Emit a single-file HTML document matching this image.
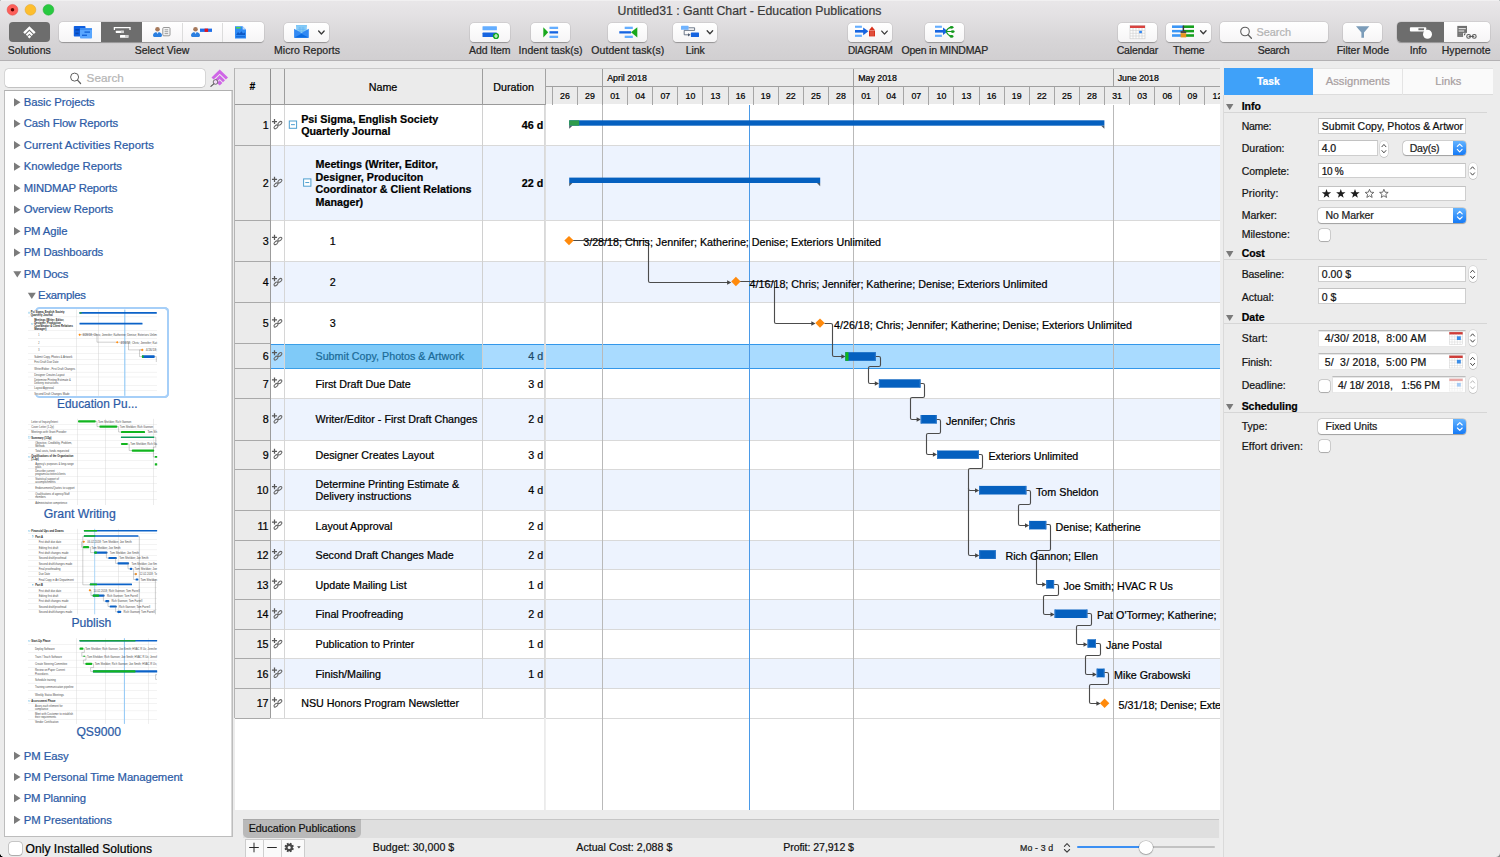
<!DOCTYPE html>
<html lang="en"><head><meta charset="utf-8"><title>Untitled31 : Gantt Chart - Education Publications</title>
<style>
html,body{margin:0;padding:0}
body{width:1500px;height:857px;position:relative;overflow:hidden;background:#ececec;font-family:"Liberation Sans",sans-serif;font-size:11px;color:#000}
.b{position:absolute;box-sizing:border-box;display:block}
.t{position:absolute;white-space:nowrap;line-height:14px;color:#000}
.tb{background:linear-gradient(#ffffff,#f6f5f6);border-radius:4px;box-shadow:0 0.5px 1px rgba(0,0,0,0.28),0 0 0 0.5px rgba(0,0,0,0.08)}
svg{overflow:visible}
.t{-webkit-text-stroke:0.22px currentColor}
</style></head>
<body>
<div class="b " style="left:0px;top:0px;width:1500px;height:60px;background:linear-gradient(#e9e7e9 0%,#e2e0e2 30%,#d8d6d8 62%,#d1cfd1 100%);border-bottom:1px solid #b3b1b3;box-sizing:content-box;"></div>
<div class="b " style="left:0px;top:0px;width:1500px;height:1.3px;background:#f1f0f1;"></div>
<div class="b " style="left:1498px;top:0px;width:2px;height:2px;background:radial-gradient(circle at 0% 100%,transparent 1.7px,#8c9a9a 2.5px);"></div>
<svg class="b" style="left:0px;top:0px;" width="61" height="21" viewBox="0 0 61 21"><circle cx="12.5" cy="9.8" r="5.4" fill="#fd5f5a" stroke="#e0443e" stroke-width="0.5"/><circle cx="30.45" cy="9.8" r="5.4" fill="#fdbe2e" stroke="#dfa023" stroke-width="0.5"/><circle cx="48.45" cy="9.8" r="5.4" fill="#28c940" stroke="#1eab2f" stroke-width="0.5"/><circle cx="12.5" cy="9.8" r="1.75" fill="#5c0300"/></svg>
<div class="t " style="font-size:12.27px;color:#3a3a3a;left:617.6px;top:3px;line-height:16px;">Untitled31 : Gantt Chart - Education Publications</div>
<div class="b " style="left:9.3px;top:22.3px;width:40.3px;height:19.9px;background:#6d6d6d;border-radius:4px;"></div>
<svg class="b" style="left:22px;top:25px;" width="16" height="16" viewBox="0 0 16 16"><path d="M7.4 1.2 L13.6 7.2 L11.9 8.9 L7.4 4.6 L2.9 8.9 L1.2 7.2 Z" fill="#fff"/>
<path d="M7.4 5.9 L11 9.5 L9.6 10.9 L7.4 8.8 L5.2 10.9 L3.8 9.5 Z" fill="#fff"/>
<path d="M7.4 10 L9.2 11.8 L7.4 13.6 L5.6 11.8 Z" fill="#fff"/></svg>
<div class="t " style="letter-spacing:-0.02px;font-size:10.5px;color:#262626;left:7.7px;top:43px;">Solutions</div>
<div class="b tb" style="left:58.8px;top:22.4px;width:205px;height:19.6px;"></div>
<div class="b " style="left:101px;top:22.4px;width:41px;height:19.6px;background:#6d6d6d;"></div>
<div class="b " style="left:182.3px;top:23px;width:0.8px;height:18.5px;background:#dcdcdc;"></div>
<div class="b " style="left:222.3px;top:23px;width:0.8px;height:18.5px;background:#dcdcdc;"></div>
<svg class="b" style="left:73px;top:25px;" width="21" height="16" viewBox="0 0 21 16"><rect x="0.8" y="1" width="11.7" height="10.6" rx="0.8" fill="#0f5fe0"/>
<rect x="2.4" y="4" width="4" height="1.6" fill="#0a47b0"/><rect x="2.4" y="7.6" width="3.2" height="1.6" fill="#0a47b0"/>
<rect x="7" y="3.2" width="12" height="10.3" rx="0.8" fill="#58a6ff"/>
<rect x="7" y="3.2" width="12" height="1.8" fill="#3f8df0"/>
<rect x="11.5" y="6.4" width="5.5" height="1.4" fill="#1565d8"/><rect x="9" y="9.6" width="5" height="1.4" fill="#1565d8"/></svg>
<svg class="b" style="left:113px;top:26px;" width="20" height="14" viewBox="0 0 20 14"><path d="M1.4 4 V1.6 H17 V4" fill="none" stroke="#fff" stroke-width="1.3"/>
<rect x="2.8" y="4.7" width="8.2" height="2.4" rx="0.5" fill="#fff"/><rect x="7.8" y="4.7" width="3.2" height="2.4" fill="#cfcfcf"/>
<rect x="7" y="9" width="8.4" height="2.7" rx="0.5" fill="#fff"/><rect x="12" y="9" width="3.4" height="2.7" fill="#cfcfcf"/></svg>
<svg class="b" style="left:152px;top:25px;" width="21" height="16" viewBox="0 0 21 16"><circle cx="5.5" cy="4.3" r="2.3" fill="#a5785a"/><path d="M1 10.5 q0 -3.6 4.5 -3.6 q4.5 0 4.5 3.6 q0 1.4 -1.2 1.4 h-6.6 q-1.2 0 -1.2 -1.4z" fill="#2b7fe0"/><path d="M4.3 7 l1.2 2 l1.2 -2z" fill="#e8f1fb"/><rect x="10.8" y="2.5" width="7.2" height="8.3" rx="1" fill="#f4f4f4" stroke="#8c8c8c" stroke-width="0.9"/>
<path d="M12.6 4.8 h3.6 M12.6 6.7 h3.6 M12.6 8.6 h3.6" stroke="#8c8c8c" stroke-width="0.8"/></svg>
<svg class="b" style="left:190px;top:25px;" width="25" height="16" viewBox="0 0 25 16"><circle cx="5.5" cy="4.3" r="2.3" fill="#a5785a"/><path d="M1 10.5 q0 -3.6 4.5 -3.6 q4.5 0 4.5 3.6 q0 1.4 -1.2 1.4 h-6.6 q-1.2 0 -1.2 -1.4z" fill="#2b7fe0"/><path d="M4.3 7 l1.2 2 l1.2 -2z" fill="#e8f1fb"/><rect x="10" y="3.6" width="12" height="3.3" fill="#1f6fe8"/><rect x="14.6" y="3.6" width="3.5" height="3.3" fill="#e8121a"/></svg>
<svg class="b" style="left:234px;top:25px;" width="15" height="16" viewBox="0 0 15 16"><path d="M1 1.2 h7.6 l3.4 3.4 v8.9 h-11z" fill="#2f8bf5"/><path d="M8.6 1.2 l3.4 3.4 h-3.4z" fill="#bcdcff"/>
<rect x="2" y="2" width="4.6" height="1.6" fill="#57d34a"/><path d="M2 10 l2-3 l1.6 1.6 l1.8-2.4 l1.6 2.2 l2 -1 v2.6z" fill="#0f58c4"/><rect x="2" y="11.2" width="9" height="1.2" fill="#1267d8"/></svg>
<div class="t " style="font-size:10.5px;color:#262626;left:134.7px;top:43px;">Select View</div>
<div class="b tb" style="left:284.2px;top:22.5px;width:44.8px;height:19.4px;"></div>
<svg class="b" style="left:293px;top:24px;" width="19" height="16" viewBox="0 0 19 16"><rect x="3" y="1.1" width="10.9" height="8.4" fill="#93d2f9"/><rect x="3" y="1.1" width="10.9" height="1.5" fill="#7cc6f6"/>
<path d="M4.4 4h8.2M4.4 5.6h8.2M4.4 7.2h8.2M6.9 3v5M10 3v5" stroke="#5fb2f2" stroke-width="0.7"/>
<path d="M1.1 4.8 L8.5 9.1 L15.8 4.8 V13.8 H1.1z" fill="#3189f3"/><path d="M1.1 13.8 L8.5 9.7 L15.8 13.8z" fill="#0b6ce3"/></svg>
<svg class="b" style="left:317px;top:30px;" width="10" height="6" viewBox="-0.65 -0 10 6"><path d="M1 1 L3.75 4 L6.5 1" fill="none" stroke="#3a3a3a" stroke-width="1.3" stroke-linecap="round" stroke-linejoin="round"/></svg>
<div class="t " style="letter-spacing:0.05px;font-size:10.5px;color:#262626;left:274px;top:43px;">Micro Reports</div>
<div class="b tb" style="left:470px;top:22.5px;width:39.6px;height:19.4px;"></div>
<svg class="b" style="left:481px;top:25px;" width="19" height="16" viewBox="0 0 19 16"><rect x="1.5" y="1.2" width="14.4" height="4.1" rx="0.6" fill="#63adff"/><rect x="1.5" y="7.6" width="14.4" height="4.4" rx="0.6" fill="#1664e0"/>
<circle cx="15" cy="11" r="3.1" fill="#17a81f"/><path d="M15 9.1v3.8M13.1 11h3.8" stroke="#dfffdc" stroke-width="1.2"/></svg>
<div class="t " style="letter-spacing:-0.07px;font-size:10.5px;color:#262626;left:469px;top:43px;">Add Item</div>
<div class="b tb" style="left:531.1px;top:22.5px;width:39.3px;height:19.4px;"></div>
<svg class="b" style="left:542px;top:25px;" width="19" height="16" viewBox="0 0 19 16"><path d="M1.3 2.2 L6.2 7.3 L1.3 12.5z" fill="#18a81c"/>
<rect x="7.5" y="1.7" width="8.6" height="2.3" fill="#63adff"/><rect x="7.5" y="6.2" width="8.6" height="2.3" fill="#1664e0"/><rect x="7.5" y="10.7" width="8.6" height="2.3" fill="#63adff"/></svg>
<div class="t " style="letter-spacing:0.03px;font-size:10.5px;color:#262626;left:518.6px;top:43px;">Indent task(s)</div>
<div class="b tb" style="left:608px;top:22.5px;width:39.4px;height:19.4px;"></div>
<svg class="b" style="left:618px;top:25px;" width="22" height="16" viewBox="0 0 22 16"><path d="M19.3 2.2 L13 7.3 L19.3 12.5z" fill="#18a81c"/>
<rect x="6.7" y="1.7" width="8.1" height="2.3" fill="#63adff"/><rect x="1.3" y="6.2" width="11.7" height="2.3" fill="#1664e0"/><rect x="6.7" y="10.7" width="8.1" height="2.3" fill="#63adff"/></svg>
<div class="t " style="letter-spacing:0.1px;font-size:10.5px;color:#262626;left:591.2px;top:43px;">Outdent task(s)</div>
<div class="b tb" style="left:672.9px;top:22.5px;width:44.6px;height:19.4px;"></div>
<svg class="b" style="left:680px;top:24px;" width="22" height="16" viewBox="0 0 22 16"><rect x="1" y="1.8" width="7.6" height="4" rx="0.6" fill="#6fb3ff"/><rect x="10.9" y="8.6" width="8.1" height="4.4" rx="0.6" fill="#1664e0"/>
<path d="M8.6 3.8 H14.6 V6.4 H4.2 V10.8 H9" fill="none" stroke="#4d5a70" stroke-width="0.8"/><path d="M8 9.2 L10.6 10.8 L8 12.4z" fill="#4d5a70"/></svg>
<svg class="b" style="left:706px;top:29px;" width="9" height="7" viewBox="-0.15 -0.8 9 7"><path d="M1 1 L3.75 4 L6.5 1" fill="none" stroke="#3a3a3a" stroke-width="1.3" stroke-linecap="round" stroke-linejoin="round"/></svg>
<div class="t " style="letter-spacing:-0.14px;font-size:10.5px;color:#262626;left:685.8px;top:43px;">Link</div>
<div class="b tb" style="left:847.8px;top:22.5px;width:44.6px;height:19.4px;"></div>
<svg class="b" style="left:854px;top:24px;" width="24" height="16" viewBox="0 0 24 16"><rect x="1" y="1.7" width="6.9" height="2.1" fill="#63adff"/><rect x="1" y="10.7" width="6.9" height="2.2" fill="#63adff"/>
<rect x="1" y="6" width="9" height="2.6" fill="#1664e0"/><path d="M9.2 3.4 L14.4 7.3 L9.2 11.2z" fill="#1664e0"/>
<path d="M15.2 6 L18 2.4 L20.8 6z" fill="#d8301c"/><rect x="15" y="6.4" width="6" height="6" fill="#d8301c"/><path d="M17 7.2v4.6M19 7.2v4.6" stroke="#f08a78" stroke-width="0.7"/></svg>
<svg class="b" style="left:880px;top:30px;" width="10" height="7" viewBox="-0.75 -0.1 10 7"><path d="M1 1 L3.75 4 L6.5 1" fill="none" stroke="#3a3a3a" stroke-width="1.3" stroke-linecap="round" stroke-linejoin="round"/></svg>
<div class="t " style="letter-spacing:-0.3px;font-size:10.03px;color:#262626;left:847.9px;top:44px;">DIAGRAM</div>
<div class="b tb" style="left:924.9px;top:22.5px;width:39.4px;height:19.4px;"></div>
<svg class="b" style="left:934px;top:24px;" width="23" height="16" viewBox="0 0 23 16"><rect x="1" y="1.7" width="6.9" height="2.1" fill="#63adff"/><rect x="1" y="10.7" width="6.9" height="2.2" fill="#63adff"/>
<rect x="1" y="6" width="9" height="2.6" fill="#1664e0"/><path d="M9 3.6 L13.8 7.3 L9 11z" fill="#1664e0"/>
<path d="M12 7.3 Q14 3.6 17 3.4 M12.5 7.5 H17.6 M12 7.3 Q14 11.6 17 12.2" fill="none" stroke="#15991f" stroke-width="1.1"/>
<ellipse cx="17.6" cy="3.3" rx="1.9" ry="1.4" fill="#15991f"/><ellipse cx="18.7" cy="7.6" rx="1.9" ry="1.4" fill="#15991f"/><ellipse cx="17.6" cy="12.4" rx="1.9" ry="1.4" fill="#15991f"/></svg>
<div class="t " style="letter-spacing:-0.18px;font-size:10.5px;color:#262626;left:901.4px;top:43px;">Open in MINDMAP</div>
<div class="b tb" style="left:1117.7px;top:22.5px;width:39.4px;height:19.4px;"></div>
<svg class="b" style="left:1129px;top:24px;" width="18" height="17" viewBox="0 -0.6 18 17"><rect x="1" y="1" width="15" height="13.2" fill="#fdfdfd" stroke="#c9c9c9" stroke-width="0.6"/><rect x="1" y="1" width="15" height="2.4" fill="#d9433f"/>
<path d="M1 6h15M1 8.7h15M1 11.4h15M4 3.4v10.8M7 3.4v10.8M10 3.4v10.8M13 3.4v10.8" stroke="#cfcfcf" stroke-width="0.6"/><rect x="10.2" y="6.2" width="2.7" height="2.4" fill="#2f86f2"/></svg>
<div class="t " style="letter-spacing:-0.16px;font-size:10.5px;color:#262626;left:1116.7px;top:43px;">Calendar</div>
<div class="b tb" style="left:1166.3px;top:22.5px;width:44.8px;height:19.4px;"></div>
<svg class="b" style="left:1171px;top:24px;" width="26" height="16" viewBox="0 0 26 16"><rect x="1" y="1.4" width="11" height="2.6" fill="#3b96f5"/><rect x="12" y="1.4" width="11" height="2.6" fill="#16a01e"/>
<rect x="1" y="5.9" width="11" height="2.5" fill="#3b96f5"/><rect x="12" y="5.9" width="11" height="2.5" fill="#16a01e"/>
<rect x="1" y="10.2" width="11" height="2.6" fill="#3b96f5"/><rect x="12" y="10.2" width="11" height="2.6" fill="#16a01e"/>
<rect x="11.6" y="1.6" width="1.5" height="5.6" fill="#3a3a3a"/><rect x="9.6" y="7" width="5.6" height="2.2" fill="#4a4a4a"/><rect x="9.6" y="9.2" width="5.6" height="4.2" fill="#e8961e"/></svg>
<svg class="b" style="left:1199px;top:29px;" width="10" height="7" viewBox="-0.55 -0.8 10 7"><path d="M1 1 L3.75 4 L6.5 1" fill="none" stroke="#3a3a3a" stroke-width="1.3" stroke-linecap="round" stroke-linejoin="round"/></svg>
<div class="t " style="letter-spacing:-0.28px;font-size:10.5px;color:#262626;left:1173px;top:43px;">Theme</div>
<div class="b tb" style="left:1219.7px;top:22.3px;width:108px;height:19.5px;"></div>
<svg class="b" style="left:1239px;top:25px;" width="15" height="16" viewBox="0 -0.5 15 16"><circle cx="6" cy="6" r="4.3" fill="none" stroke="#5e5e5e" stroke-width="1.1"/><path d="M9.1 9.3 L12.4 12.8" stroke="#5e5e5e" stroke-width="1.3" stroke-linecap="round"/></svg>
<div class="t " style="font-size:10.92px;color:#b3b3b3;left:1256.4px;top:24px;line-height:16px;">Search</div>
<div class="t " style="letter-spacing:-0.28px;font-size:10.5px;color:#262626;left:1257.7px;top:43px;">Search</div>
<div class="b tb" style="left:1343px;top:22.5px;width:39.4px;height:19.4px;"></div>
<svg class="b" style="left:1355px;top:25px;" width="17" height="15" viewBox="0 0 17 15"><path d="M1 1.3 H14.4 L9 7.4 V12.8 H6.4 V7.4z" fill="#7b9cb9"/></svg>
<div class="t " style="letter-spacing:-0.02px;font-size:10.5px;color:#262626;left:1336.7px;top:43px;">Filter Mode</div>
<div class="b tb" style="left:1397.2px;top:22.2px;width:93px;height:20px;"></div>
<div class="b " style="left:1397.2px;top:22.2px;width:46.8px;height:20px;background:#6d6d6d;border-radius:4px 0 0 4px;"></div>
<svg class="b" style="left:1408px;top:25px;" width="27" height="16" viewBox="0 0 27 16"><rect x="1.9" y="2.2" width="16.4" height="4.2" rx="0.9" fill="#fff"/><rect x="10.4" y="3.3" width="5.6" height="1.9" fill="#6d6d6d"/>
<circle cx="19.5" cy="9.3" r="4.5" fill="#fff"/></svg>
<svg class="b" style="left:1456px;top:25px;" width="23" height="16" viewBox="0 0 23 16"><rect x="1.3" y="0.9" width="9.7" height="11" fill="#707070"/><rect x="2.6" y="3" width="7.2" height="1.2" fill="#dcdcdc"/><rect x="2.6" y="5.3" width="5.6" height="1.4" fill="#cfcfcf"/>
<path d="M2.6 8.4h4M2.6 10.2h4" stroke="#8c8c8c" stroke-width="0.8"/>
<rect x="7.1" y="7.9" width="4.6" height="4.6" fill="#fbfbfb"/><path d="M8 8.6 H10.2 L8 10.8z" fill="#5a5a5a"/>
<circle cx="12.6" cy="11.4" r="1.85" fill="#fbfbfb" stroke="#585858" stroke-width="1.1"/><circle cx="18.3" cy="11.4" r="1.85" fill="#fbfbfb" stroke="#585858" stroke-width="1.1"/><path d="M12.6 11.4h5.7" stroke="#585858" stroke-width="1.1"/></svg>
<div class="t " style="letter-spacing:-0.13px;font-size:10.5px;color:#262626;left:1409.7px;top:43px;">Info</div>
<div class="t " style="letter-spacing:0.06px;font-size:10.5px;color:#262626;left:1441.7px;top:43px;">Hypernote</div>
<div class="b " style="left:5.2px;top:68.9px;width:200.2px;height:18.3px;background:#fff;border-radius:3.5px;box-shadow:0 0 0 0.5px rgba(0,0,0,0.18),0 0.5px 0.5px rgba(0,0,0,0.18);"></div>
<svg class="b" style="left:69px;top:71px;" width="14" height="15" viewBox="0 -0.5 14 15"><circle cx="5.6" cy="5.6" r="4" fill="none" stroke="#5e5e5e" stroke-width="1"/><path d="M8.5 8.7 L11.6 12" stroke="#5e5e5e" stroke-width="1.2" stroke-linecap="round"/></svg>
<div class="t " style="font-size:11.74px;color:#b5b5b5;left:86.6px;top:70px;line-height:16px;">Search</div>
<svg class="b" style="left:210px;top:69px;" width="20" height="19" viewBox="0 0 20 19"><path d="M9.7 0.6 L18 8.4 L15.9 10.5 L9.7 4.7 L3.6 10.5 L1.5 8.4z" fill="#cf66e6"/>
<path d="M9.7 5.9 L15 11.2 L13 13.2 L9.7 10 L6.5 13.2 L4.5 11.2z" fill="#cf66e6"/>
<path d="M9.7 11.2 L12.4 13.9 L9.7 16.6 L7 13.9z" fill="#cf66e6"/>
<circle cx="5.5" cy="13" r="2.3" fill="#f3dcf8" stroke="#555" stroke-width="0.8"/><path d="M3.8 14.8 L0.9 17.4" stroke="#555" stroke-width="1.1" stroke-linecap="round"/></svg>
<div class="b " style="left:4.4px;top:89.6px;width:228.2px;height:747.8px;background:#fff;border:1px solid #bdbdbd;border-top-color:#b0b0b0;"></div>
<div class="b " style="left:231px;top:91px;width:0.7px;height:745.4px;background:#d9d9d9;"></div>
<svg class="b" style="left:14px;top:98px;" width="8" height="11" viewBox="-0 -0.2 8 11"><path d="M0 0 L6.5 4.1 L0 8.2z" fill="#7b7b7b"/></svg>
<div class="t sf" style="letter-spacing:-0.04px;font-size:11.3px;color:#2c5ba6;left:23.7px;top:95px;">Basic Projects</div>
<svg class="b" style="left:14px;top:119px;" width="8" height="11" viewBox="-0 -0.6 8 11"><path d="M0 0 L6.5 4.1 L0 8.2z" fill="#7b7b7b"/></svg>
<div class="t sf" style="letter-spacing:-0.1px;font-size:11.3px;color:#2c5ba6;left:23.7px;top:116px;">Cash Flow Reports</div>
<svg class="b" style="left:14px;top:141px;" width="8" height="11" viewBox="-0 -0.1 8 11"><path d="M0 0 L6.5 4.1 L0 8.2z" fill="#7b7b7b"/></svg>
<div class="t sf" style="letter-spacing:0.11px;font-size:11.3px;color:#2c5ba6;left:23.7px;top:138px;">Current Activities Reports</div>
<svg class="b" style="left:14px;top:162px;" width="8" height="11" viewBox="-0 -0.6 8 11"><path d="M0 0 L6.5 4.1 L0 8.2z" fill="#7b7b7b"/></svg>
<div class="t sf" style="letter-spacing:-0.02px;font-size:11.3px;color:#2c5ba6;left:23.7px;top:159px;">Knowledge Reports</div>
<svg class="b" style="left:14px;top:184px;" width="8" height="11" viewBox="-0 -0.1 8 11"><path d="M0 0 L6.5 4.1 L0 8.2z" fill="#7b7b7b"/></svg>
<div class="t sf" style="letter-spacing:-0.16px;font-size:11.3px;color:#2c5ba6;left:23.7px;top:181px;">MINDMAP Reports</div>
<svg class="b" style="left:14px;top:205px;" width="8" height="11" viewBox="-0 -0.6 8 11"><path d="M0 0 L6.5 4.1 L0 8.2z" fill="#7b7b7b"/></svg>
<div class="t sf" style="letter-spacing:-0.02px;font-size:11.3px;color:#2c5ba6;left:23.7px;top:202px;">Overview Reports</div>
<svg class="b" style="left:14px;top:227px;" width="8" height="11" viewBox="-0 -0.1 8 11"><path d="M0 0 L6.5 4.1 L0 8.2z" fill="#7b7b7b"/></svg>
<div class="t sf" style="letter-spacing:-0.11px;font-size:11.3px;color:#2c5ba6;left:23.7px;top:224px;">PM Agile</div>
<svg class="b" style="left:14px;top:248px;" width="8" height="11" viewBox="-0 -0.6 8 11"><path d="M0 0 L6.5 4.1 L0 8.2z" fill="#7b7b7b"/></svg>
<div class="t sf" style="letter-spacing:-0.12px;font-size:11.3px;color:#2c5ba6;left:23.7px;top:245px;">PM Dashboards</div>
<svg class="b" style="left:13px;top:271px;" width="11" height="8" viewBox="-0.3 -0 11 8"><path d="M0 0.3 H8 L4 6.6z" fill="#7b7b7b"/></svg>
<div class="t sf" style="letter-spacing:-0.19px;font-size:11.3px;color:#2c5ba6;left:23.7px;top:267px;">PM Docs</div>
<svg class="b" style="left:27px;top:292px;" width="11" height="9" viewBox="-0.8 -0.5 11 9"><path d="M0 0.3 H8 L4 6.6z" fill="#7b7b7b"/></svg>
<div class="t sf" style="letter-spacing:-0.25px;font-size:11.3px;color:#2c5ba6;left:38.1px;top:288px;">Examples</div>
<svg class="b" style="left:14px;top:751px;" width="8" height="11" viewBox="-0 -0.7 8 11"><path d="M0 0 L6.5 4.1 L0 8.2z" fill="#7b7b7b"/></svg>
<div class="t sf" style="letter-spacing:-0.02px;font-size:11.3px;color:#2c5ba6;left:23.7px;top:749px;">PM Easy</div>
<svg class="b" style="left:14px;top:772px;" width="8" height="11" viewBox="-0 -0.9 8 11"><path d="M0 0 L6.5 4.1 L0 8.2z" fill="#7b7b7b"/></svg>
<div class="t sf" style="letter-spacing:-0.09px;font-size:11.3px;color:#2c5ba6;left:23.7px;top:770px;">PM Personal Time Management</div>
<svg class="b" style="left:14px;top:794px;" width="8" height="11" viewBox="-0 -0.1 8 11"><path d="M0 0 L6.5 4.1 L0 8.2z" fill="#7b7b7b"/></svg>
<div class="t sf" style="letter-spacing:-0.18px;font-size:11.3px;color:#2c5ba6;left:23.7px;top:791px;">PM Planning</div>
<svg class="b" style="left:14px;top:815px;" width="8" height="11" viewBox="-0 -0.7 8 11"><path d="M0 0 L6.5 4.1 L0 8.2z" fill="#7b7b7b"/></svg>
<div class="t sf" style="letter-spacing:-0.06px;font-size:11.3px;color:#2c5ba6;left:23.7px;top:813px;">PM Presentations</div>
<div class="t " style="font-size:11.88px;color:#2c5ba6;left:57px;top:395px;line-height:18px;">Education Pu...</div>
<div class="t " style="font-size:12.28px;color:#2c5ba6;left:43.7px;top:505px;line-height:18px;">Grant Writing</div>
<div class="t " style="font-size:12.2px;color:#2c5ba6;left:71.4px;top:614px;line-height:18px;">Publish</div>
<div class="t " style="font-size:12.15px;color:#2c5ba6;left:76.4px;top:723px;line-height:18px;">QS9000</div>
<div class="b " style="left:9px;top:842px;width:12.8px;height:12.8px;background:#fff;border-radius:3px;box-shadow:0 0 0 0.5px rgba(0,0,0,0.3),0 0.5px 1px rgba(0,0,0,0.15);"></div>
<div class="t " style="font-size:12.1px;left:25.6px;top:840px;line-height:18px;">Only Installed Solutions</div>
<div class="b " style="left:34.9px;top:307.1px;width:134.4px;height:91.2px;border:2.9px solid #a6cff8;border-radius:4.5px;"></div>
<div class="b " style="left:28px;top:309.9px;width:129.2px;height:85.6px;background:#fff;"></div>
<div class="b " style="left:28px;top:418.8px;width:129.2px;height:86.2px;background:#fff;"></div>
<div class="b " style="left:28px;top:528.8px;width:129.2px;height:85.5px;background:#fff;"></div>
<div class="b " style="left:28px;top:638.2px;width:129.2px;height:85.7px;background:#fff;"></div>
<svg class="b" style="left:20px;top:300px" width="160" height="430" viewBox="20 300 160 430"><rect x="28" y="316.73" width="129" height="0.35" fill="#dcdcdc"/><rect x="28" y="330.43" width="129" height="0.35" fill="#dcdcdc"/><rect x="28" y="338.33" width="129" height="0.35" fill="#dcdcdc"/><rect x="28" y="346.13" width="129" height="0.35" fill="#dcdcdc"/><rect x="28" y="353.53" width="129" height="0.35" fill="#dcdcdc"/><rect x="28" y="359.13" width="129" height="0.35" fill="#dcdcdc"/><rect x="28" y="364.33" width="129" height="0.35" fill="#dcdcdc"/><rect x="28" y="371.93" width="129" height="0.35" fill="#dcdcdc"/><rect x="28" y="376.83" width="129" height="0.35" fill="#dcdcdc"/><rect x="28" y="385.03" width="129" height="0.35" fill="#dcdcdc"/><rect x="28" y="390.23" width="129" height="0.35" fill="#dcdcdc"/><rect x="76.2" y="309.6" width="0.4" height="86.2" fill="#d2d2d2"/><rect x="98.2" y="309.6" width="0.4" height="86.2" fill="#c8c8c8"/><rect x="124.25" y="309.6" width="1.1" height="86.2" fill="#8fc7f5"/><rect x="79.5" y="311.9" width="77.3" height="1.9" rx="0.3" fill="#0b62c8"/><rect x="79.5" y="311.9" width="2.1" height="1.9" rx="0.3" fill="#2e9b4a"/><rect x="79.5" y="322.7" width="63" height="1.9" rx="0.3" fill="#0b62c8"/><path d="M80.5 334.7 H97 V342.2 H116" fill="none" stroke="#777" stroke-width="0.35"/><path d="M118.5 342.2 H128.5 V349.9 H141" fill="none" stroke="#777" stroke-width="0.35"/><path d="M143.5 349.9 H139.5 V356.6 H142" fill="none" stroke="#777" stroke-width="0.35"/><path d="M154.8 356.6 H156.3 V362" fill="none" stroke="#777" stroke-width="0.35"/><path d="M79.7 333.4 l1.3 1.3 l-1.3 1.3 l-1.3 -1.3z" fill="#ff8a0c"/><path d="M117.2 340.9 l1.3 1.3 l-1.3 1.3 l-1.3 -1.3z" fill="#ff8a0c"/><path d="M142.2 348.6 l1.3 1.3 l-1.3 1.3 l-1.3 -1.3z" fill="#ff8a0c"/><rect x="141.9" y="355.2" width="12.9" height="2.8" rx="0.9" fill="#0b62c8"/><rect x="141.9" y="355.2" width="1.7" height="2.8" rx="0.9" fill="#12b51f"/><text x="82.4" y="336.1" textLength="74.6" lengthAdjust="spacingAndGlyphs" font-size="2.7" fill="#4a4a4a">3/28/18; Chris; Jennifer; Katherine; Denise; Exteriors Unlim</text><text x="120.4" y="343.6" textLength="36.6" lengthAdjust="spacingAndGlyphs" font-size="2.7" fill="#4a4a4a">4/16/18; Chris; Jennifer; Kat</text><text x="145.8" y="351.3" textLength="11.2" lengthAdjust="spacingAndGlyphs" font-size="2.7" fill="#4a4a4a">4/26/18;</text><rect x="28.4" y="312.05" width="1.5" height="1.5" fill="#e6f4fc" stroke="#7dc3e8" stroke-width="0.3"/><rect x="31.6" y="323.25" width="1.5" height="1.5" fill="#e6f4fc" stroke="#7dc3e8" stroke-width="0.3"/><text x="30.7" y="313" textLength="33.9" lengthAdjust="spacingAndGlyphs" font-size="2.7" font-weight="bold" fill="#1a1a1a">Psi Sigma, English Society</text><text x="30.7" y="316.3" textLength="22.1" lengthAdjust="spacingAndGlyphs" font-size="2.7" font-weight="bold" fill="#1a1a1a">Quarterly Journal</text><text x="34.2" y="320.6" textLength="29.8" lengthAdjust="spacingAndGlyphs" font-size="2.7" font-weight="bold" fill="#1a1a1a">Meetings (Writer, Editor,</text><text x="34.2" y="323.7" textLength="26.8" lengthAdjust="spacingAndGlyphs" font-size="2.7" font-weight="bold" fill="#1a1a1a">Designer, Produciton</text><text x="34.2" y="326.9" textLength="38.8" lengthAdjust="spacingAndGlyphs" font-size="2.7" font-weight="bold" fill="#1a1a1a">Coordinator &amp; Client Relations</text><text x="34.2" y="330" textLength="12.3" lengthAdjust="spacingAndGlyphs" font-size="2.7" font-weight="bold" fill="#1a1a1a">Manager)</text><text x="38.2" y="336.1" textLength="1.2" lengthAdjust="spacingAndGlyphs" font-size="2.7" fill="#4a4a4a">1</text><text x="38.2" y="343.7" textLength="1.2" lengthAdjust="spacingAndGlyphs" font-size="2.7" fill="#4a4a4a">2</text><text x="38.2" y="351.3" textLength="1.2" lengthAdjust="spacingAndGlyphs" font-size="2.7" fill="#4a4a4a">3</text><text x="34.2" y="357.9" textLength="38.1" lengthAdjust="spacingAndGlyphs" font-size="2.7" fill="#4a4a4a">Submit Copy, Photos &amp; Artwork</text><text x="34.2" y="363.1" textLength="24.3" lengthAdjust="spacingAndGlyphs" font-size="2.7" fill="#4a4a4a">First Draft Due Date</text><text x="34.2" y="369.8" textLength="40.8" lengthAdjust="spacingAndGlyphs" font-size="2.7" fill="#4a4a4a">Writer/Editor - First Draft Changes</text><text x="34.2" y="376.2" textLength="30.4" lengthAdjust="spacingAndGlyphs" font-size="2.7" fill="#4a4a4a">Designer Creates Layout</text><text x="34.2" y="381.3" textLength="36.6" lengthAdjust="spacingAndGlyphs" font-size="2.7" fill="#4a4a4a">Determine Printing Estimate &amp;</text><text x="34.2" y="384.4" textLength="24.1" lengthAdjust="spacingAndGlyphs" font-size="2.7" fill="#4a4a4a">Delivery instructions</text><text x="34.2" y="389.3" textLength="19.8" lengthAdjust="spacingAndGlyphs" font-size="2.7" fill="#4a4a4a">Layout Approval</text><text x="34.2" y="394.6" textLength="35.4" lengthAdjust="spacingAndGlyphs" font-size="2.7" fill="#4a4a4a">Second Draft Changes Made</text><rect x="28" y="424.03" width="129" height="0.35" fill="#dcdcdc"/><rect x="28" y="429.33" width="129" height="0.35" fill="#dcdcdc"/><rect x="28" y="434.73" width="129" height="0.35" fill="#dcdcdc"/><rect x="28" y="440.43" width="129" height="0.35" fill="#dcdcdc"/><rect x="28" y="447.43" width="129" height="0.35" fill="#dcdcdc"/><rect x="28" y="453.63" width="129" height="0.35" fill="#dcdcdc"/><rect x="28" y="460.33" width="129" height="0.35" fill="#dcdcdc"/><rect x="28" y="468.13" width="129" height="0.35" fill="#dcdcdc"/><rect x="28" y="476.03" width="129" height="0.35" fill="#dcdcdc"/><rect x="28" y="483.53" width="129" height="0.35" fill="#dcdcdc"/><rect x="28" y="491.13" width="129" height="0.35" fill="#dcdcdc"/><rect x="28" y="499.13" width="129" height="0.35" fill="#dcdcdc"/><rect x="77" y="418.8" width="0.4" height="86.2" fill="#d2d2d2"/><rect x="105.2" y="418.8" width="0.4" height="86.2" fill="#d0d0d0"/><rect x="153.4" y="418.8" width="0.4" height="86.2" fill="#d0d0d0"/><path d="M95.8 421.4 H97 V426.6 H99.3" fill="none" stroke="#777" stroke-width="0.35"/><path d="M117.4 426.6 H118.6 V432 H121" fill="none" stroke="#777" stroke-width="0.35"/><path d="M154.2 437.2 H155.8 V447 H153.4 V457 H155" fill="none" stroke="#777" stroke-width="0.35"/><path d="M127.9 444 H129.2 V450.5 H131.7" fill="none" stroke="#777" stroke-width="0.35"/><rect x="78" y="420.3" width="17.8" height="2.2" rx="0.9" fill="#12b51f"/><rect x="99.3" y="425.5" width="18.1" height="2.2" rx="0.9" fill="#12b51f"/><rect x="120.9" y="431" width="24.2" height="2.1" rx="0.9" fill="#12b51f"/><rect x="120.9" y="436.4" width="33.3" height="1.6" rx="0.3" fill="#0c9a58"/><rect x="120.9" y="442.9" width="7" height="2.1" rx="0.9" fill="#12b51f"/><rect x="131.7" y="449.4" width="22.5" height="2.3" rx="0.9" fill="#12b51f"/><rect x="154.8" y="455.9" width="2.4" height="1.9" rx="0.3" fill="#12b51f"/><rect x="154.8" y="463.3" width="2.4" height="2.2" rx="0.3" fill="#12b51f"/><text x="98" y="422.7" textLength="33.4" lengthAdjust="spacingAndGlyphs" font-size="2.7" fill="#4a4a4a">Tom Sheldon; Rich Gannon</text><text x="119.8" y="428" textLength="33.2" lengthAdjust="spacingAndGlyphs" font-size="2.7" fill="#4a4a4a">Tom Sheldon; Rich Gannon</text><text x="147.4" y="433.3" textLength="9.6" lengthAdjust="spacingAndGlyphs" font-size="2.7" fill="#4a4a4a">Tom Sh</text><text x="130.3" y="445.3" textLength="26.7" lengthAdjust="spacingAndGlyphs" font-size="2.7" fill="#4a4a4a">Tom Sheldon; Rich Ga</text><rect x="28.6" y="436.75" width="1.5" height="1.5" fill="#e6f4fc" stroke="#7dc3e8" stroke-width="0.3"/><rect x="28.6" y="456.25" width="1.5" height="1.5" fill="#e6f4fc" stroke="#7dc3e8" stroke-width="0.3"/><text x="31.3" y="422.7" textLength="26.6" lengthAdjust="spacingAndGlyphs" font-size="2.7" fill="#4a4a4a">Letter of Inquiry/Intent</text><text x="31.3" y="428" textLength="22.7" lengthAdjust="spacingAndGlyphs" font-size="2.7" fill="#4a4a4a">Cover Letter (1-2p)</text><text x="31.3" y="433.3" textLength="35" lengthAdjust="spacingAndGlyphs" font-size="2.7" fill="#4a4a4a">Meetings with Grant Provider</text><text x="31.3" y="439" textLength="20.2" lengthAdjust="spacingAndGlyphs" font-size="2.7" font-weight="bold" fill="#1a1a1a">Summary (1/2p)</text><text x="35.2" y="443.6" textLength="36.8" lengthAdjust="spacingAndGlyphs" font-size="2.7" fill="#4a4a4a">Objective, Credibility, Problem,</text><text x="35.2" y="446.9" textLength="9.7" lengthAdjust="spacingAndGlyphs" font-size="2.7" fill="#4a4a4a">Methods</text><text x="35.2" y="451.9" textLength="33.8" lengthAdjust="spacingAndGlyphs" font-size="2.7" fill="#4a4a4a">Total costs, funds requested</text><text x="31.3" y="456.8" textLength="42.1" lengthAdjust="spacingAndGlyphs" font-size="2.7" font-weight="bold" fill="#1a1a1a">Qualifications of the Organization</text><text x="31.3" y="460" textLength="7.4" lengthAdjust="spacingAndGlyphs" font-size="2.7" font-weight="bold" fill="#1a1a1a">(1-2p)</text><text x="35.2" y="464.5" textLength="38.5" lengthAdjust="spacingAndGlyphs" font-size="2.7" fill="#4a4a4a">Agency's purposes &amp; long-range</text><text x="35.2" y="467.7" textLength="6.2" lengthAdjust="spacingAndGlyphs" font-size="2.7" fill="#4a4a4a">goals</text><text x="35.2" y="472.1" textLength="19.5" lengthAdjust="spacingAndGlyphs" font-size="2.7" fill="#4a4a4a">Describe current</text><text x="35.2" y="475.3" textLength="30.3" lengthAdjust="spacingAndGlyphs" font-size="2.7" fill="#4a4a4a">programs/activities/clients</text><text x="35.2" y="479.6" textLength="23.9" lengthAdjust="spacingAndGlyphs" font-size="2.7" fill="#4a4a4a">Statistical support of</text><text x="35.2" y="482.9" textLength="20.4" lengthAdjust="spacingAndGlyphs" font-size="2.7" fill="#4a4a4a">accomplishments</text><text x="35.2" y="488.9" textLength="39.4" lengthAdjust="spacingAndGlyphs" font-size="2.7" fill="#4a4a4a">Endorsements/Quotes to support</text><text x="35.2" y="494.9" textLength="34.4" lengthAdjust="spacingAndGlyphs" font-size="2.7" fill="#4a4a4a">Qualifications of agency/Staff</text><text x="35.2" y="498.3" textLength="10.7" lengthAdjust="spacingAndGlyphs" font-size="2.7" fill="#4a4a4a">members</text><text x="35.2" y="504.1" textLength="32.1" lengthAdjust="spacingAndGlyphs" font-size="2.7" fill="#4a4a4a">Administrative competence</text><rect x="28" y="533.63" width="129" height="0.35" fill="#dcdcdc"/><rect x="28" y="539.03" width="129" height="0.35" fill="#dcdcdc"/><rect x="28" y="544.33" width="129" height="0.35" fill="#dcdcdc"/><rect x="28" y="549.73" width="129" height="0.35" fill="#dcdcdc"/><rect x="28" y="555.13" width="129" height="0.35" fill="#dcdcdc"/><rect x="28" y="560.53" width="129" height="0.35" fill="#dcdcdc"/><rect x="28" y="565.93" width="129" height="0.35" fill="#dcdcdc"/><rect x="28" y="571.33" width="129" height="0.35" fill="#dcdcdc"/><rect x="28" y="576.63" width="129" height="0.35" fill="#dcdcdc"/><rect x="28" y="582.03" width="129" height="0.35" fill="#dcdcdc"/><rect x="28" y="587.43" width="129" height="0.35" fill="#dcdcdc"/><rect x="28" y="592.73" width="129" height="0.35" fill="#dcdcdc"/><rect x="28" y="598.13" width="129" height="0.35" fill="#dcdcdc"/><rect x="28" y="603.63" width="129" height="0.35" fill="#dcdcdc"/><rect x="28" y="609.03" width="129" height="0.35" fill="#dcdcdc"/><rect x="77" y="528.8" width="0.4" height="85.5" fill="#d2d2d2"/><rect x="118.2" y="528.8" width="0.4" height="85.5" fill="#d0d0d0"/><rect x="94.25" y="528.8" width="0.9" height="85.5" fill="#a4d2f6"/><path d="M83.9 536.6 H82.8 V584.8 H89.8" fill="none" stroke="#777" stroke-width="0.35"/><path d="M138.4 536.6 H139.3 V614.3" fill="none" stroke="#777" stroke-width="0.35"/><path d="M155.4 579 V614.3" fill="none" stroke="#777" stroke-width="0.35"/><rect x="83.9" y="529.9" width="73.3" height="1.5" rx="0.3" fill="#0b62c8"/><rect x="83.9" y="529.9" width="13.1" height="1.5" rx="0.3" fill="#12b51f"/><rect x="83.9" y="535.2" width="54.5" height="1.6" rx="0.3" fill="#0b62c8"/><rect x="83.9" y="535.2" width="11.4" height="1.6" rx="0.3" fill="#12b51f"/><rect x="89.8" y="583.6" width="42.2" height="1.6" rx="0.3" fill="#0b62c8"/><rect x="89.8" y="583.6" width="7.2" height="1.6" rx="0.3" fill="#12b51f"/><path d="M83.8 540.5 l1.3 1.3 l-1.3 1.3 l-1.3 -1.3z" fill="#ff8a0c"/><path d="M135.9 572.8 l1.3 1.3 l-1.3 1.3 l-1.3 -1.3z" fill="#ff8a0c"/><path d="M89.9 588.9 l1.3 1.3 l-1.3 1.3 l-1.3 -1.3z" fill="#ff8a0c"/><rect x="83" y="546.1" width="6.1" height="2.2" rx="0.9" fill="#12b51f"/><rect x="94.1" y="551.5" width="13.4" height="2.2" rx="0.9" fill="#0b62c8"/><rect x="94.1" y="551.5" width="2.9" height="2.2" rx="0.9" fill="#12b51f"/><rect x="108.3" y="556.9" width="8.5" height="2.2" rx="0.9" fill="#0b62c8"/><rect x="117.4" y="562.3" width="11.7" height="2.2" rx="0.9" fill="#0b62c8"/><rect x="129.7" y="567.7" width="2.6" height="2.2" rx="0.9" fill="#0b62c8"/><rect x="135.5" y="578.4" width="2.9" height="2.2" rx="0.9" fill="#0b62c8"/><rect x="92.6" y="594.5" width="12" height="2.2" rx="0.9" fill="#0b62c8"/><rect x="92.6" y="594.5" width="6.7" height="2.2" rx="0.9" fill="#12b51f"/><rect x="105.2" y="600" width="4.1" height="2.2" rx="0.9" fill="#0b62c8"/><rect x="109.6" y="605.4" width="7.2" height="2.2" rx="0.9" fill="#0b62c8"/><rect x="117.2" y="610.7" width="4.1" height="2.2" rx="0.9" fill="#0b62c8"/><path d="M83.8 541.8 H81.6 V547.2 H83" fill="none" stroke="#777" stroke-width="0.35"/><path d="M89.1 547.2 H90.6 V552.6 H94.1" fill="none" stroke="#777" stroke-width="0.35"/><path d="M107.5 552.6 H106.4 V558 H108.3" fill="none" stroke="#777" stroke-width="0.35"/><path d="M116.8 558 H115.6 V563.4 H117.4" fill="none" stroke="#777" stroke-width="0.35"/><path d="M129.1 563.4 H128 V568.8 H129.7" fill="none" stroke="#777" stroke-width="0.35"/><path d="M132.3 568.8 H133.6 V574.1 H134.6" fill="none" stroke="#777" stroke-width="0.35"/><path d="M137 574.1 H133.6 V579.5 H135.5" fill="none" stroke="#777" stroke-width="0.35"/><path d="M89.9 590.2 H91 V595.6 H92.6" fill="none" stroke="#777" stroke-width="0.35"/><path d="M104.6 595.6 H103.4 V601.1 H105.2" fill="none" stroke="#777" stroke-width="0.35"/><path d="M109.3 601.1 H108 V606.5 H109.6" fill="none" stroke="#777" stroke-width="0.35"/><path d="M116.8 606.5 H115.6 V611.8 H117.2" fill="none" stroke="#777" stroke-width="0.35"/><text x="87.3" y="543.1" textLength="44.4" lengthAdjust="spacingAndGlyphs" font-size="2.7" fill="#4a4a4a">06.02.2018; Tom Sheldon; Joe Smith</text><text x="91.4" y="548.5" textLength="29.2" lengthAdjust="spacingAndGlyphs" font-size="2.7" fill="#4a4a4a">Tom Sheldon; Joe Smith</text><text x="109.8" y="553.9" textLength="29.2" lengthAdjust="spacingAndGlyphs" font-size="2.7" fill="#4a4a4a">Tom Sheldon; Joe Smith</text><text x="119.2" y="559.3" textLength="29.2" lengthAdjust="spacingAndGlyphs" font-size="2.7" fill="#4a4a4a">Tom Sheldon; Joe Smith</text><text x="131.4" y="564.7" textLength="25.6" lengthAdjust="spacingAndGlyphs" font-size="2.7" fill="#4a4a4a">Tom Sheldon; Joe Sm</text><text x="134.6" y="570.1" textLength="22.4" lengthAdjust="spacingAndGlyphs" font-size="2.7" fill="#4a4a4a">Tom Sheldon; Joe</text><text x="139.6" y="575.4" textLength="17.4" lengthAdjust="spacingAndGlyphs" font-size="2.7" fill="#4a4a4a">12.02.2018; To</text><text x="140.5" y="580.8" textLength="16.5" lengthAdjust="spacingAndGlyphs" font-size="2.7" fill="#4a4a4a">Tom Sheldon</text><text x="93.5" y="591.5" textLength="46.1" lengthAdjust="spacingAndGlyphs" font-size="2.7" fill="#4a4a4a">10.02.2018; Rich Gannon; Tom Farrell</text><text x="106.9" y="596.9" textLength="31" lengthAdjust="spacingAndGlyphs" font-size="2.7" fill="#4a4a4a">Rich Gannon; Tom Farrell</text><text x="111.4" y="602.4" textLength="30.9" lengthAdjust="spacingAndGlyphs" font-size="2.7" fill="#4a4a4a">Rich Gannon; Tom Farrell</text><text x="119" y="607.8" textLength="31.1" lengthAdjust="spacingAndGlyphs" font-size="2.7" fill="#4a4a4a">Rich Gannon; Tom Farrell</text><text x="123.6" y="613.1" textLength="31.2" lengthAdjust="spacingAndGlyphs" font-size="2.7" fill="#4a4a4a">Rich Gannon; Tom Farrell</text><rect x="28.6" y="530.35" width="1.5" height="1.5" fill="#e6f4fc" stroke="#7dc3e8" stroke-width="0.3"/><rect x="32.2" y="535.75" width="1.5" height="1.5" fill="#e6f4fc" stroke="#7dc3e8" stroke-width="0.3"/><rect x="32.2" y="584.15" width="1.5" height="1.5" fill="#e6f4fc" stroke="#7dc3e8" stroke-width="0.3"/><text x="31.3" y="532.4" textLength="32.5" lengthAdjust="spacingAndGlyphs" font-size="2.7" font-weight="bold" fill="#1a1a1a">Financial Ups and Downs</text><text x="35.2" y="537.8" textLength="7.8" lengthAdjust="spacingAndGlyphs" font-size="2.7" font-weight="bold" fill="#1a1a1a">Part A</text><text x="35.2" y="586.2" textLength="7.8" lengthAdjust="spacingAndGlyphs" font-size="2.7" font-weight="bold" fill="#1a1a1a">Part B</text><text x="38.7" y="543.1" textLength="22.5" lengthAdjust="spacingAndGlyphs" font-size="2.7" fill="#4a4a4a">First draft due date</text><text x="38.7" y="548.5" textLength="19.6" lengthAdjust="spacingAndGlyphs" font-size="2.7" fill="#4a4a4a">Editing first draft</text><text x="38.7" y="553.9" textLength="29.7" lengthAdjust="spacingAndGlyphs" font-size="2.7" fill="#4a4a4a">First draft changes made</text><text x="38.7" y="559.3" textLength="27.7" lengthAdjust="spacingAndGlyphs" font-size="2.7" fill="#4a4a4a">Second draft/proofread</text><text x="38.7" y="564.7" textLength="33.6" lengthAdjust="spacingAndGlyphs" font-size="2.7" fill="#4a4a4a">Second draft/changes made</text><text x="38.7" y="570.1" textLength="21.8" lengthAdjust="spacingAndGlyphs" font-size="2.7" fill="#4a4a4a">Final proofreading</text><text x="38.7" y="575.4" textLength="11.4" lengthAdjust="spacingAndGlyphs" font-size="2.7" fill="#4a4a4a">Due Date</text><text x="38.7" y="580.8" textLength="35" lengthAdjust="spacingAndGlyphs" font-size="2.7" fill="#4a4a4a">Final Copy in Art Department</text><text x="38.7" y="591.5" textLength="22.5" lengthAdjust="spacingAndGlyphs" font-size="2.7" fill="#4a4a4a">First draft due date</text><text x="38.7" y="596.9" textLength="19.6" lengthAdjust="spacingAndGlyphs" font-size="2.7" fill="#4a4a4a">Editing first draft</text><text x="38.7" y="602.4" textLength="29.7" lengthAdjust="spacingAndGlyphs" font-size="2.7" fill="#4a4a4a">First draft changes made</text><text x="38.7" y="607.8" textLength="27.7" lengthAdjust="spacingAndGlyphs" font-size="2.7" fill="#4a4a4a">Second draft/proofread</text><text x="38.7" y="613.1" textLength="33.6" lengthAdjust="spacingAndGlyphs" font-size="2.7" fill="#4a4a4a">Second draft/changes made</text><rect x="28" y="644.43" width="129" height="0.35" fill="#dcdcdc"/><rect x="28" y="652.03" width="129" height="0.35" fill="#dcdcdc"/><rect x="28" y="659.93" width="129" height="0.35" fill="#dcdcdc"/><rect x="28" y="667.43" width="129" height="0.35" fill="#dcdcdc"/><rect x="28" y="675.33" width="129" height="0.35" fill="#dcdcdc"/><rect x="28" y="682.93" width="129" height="0.35" fill="#dcdcdc"/><rect x="28" y="690.23" width="129" height="0.35" fill="#dcdcdc"/><rect x="28" y="698.13" width="129" height="0.35" fill="#dcdcdc"/><rect x="28" y="703.13" width="129" height="0.35" fill="#dcdcdc"/><rect x="28" y="710.73" width="129" height="0.35" fill="#dcdcdc"/><rect x="28" y="719.13" width="129" height="0.35" fill="#dcdcdc"/><rect x="76.4" y="638.2" width="0.4" height="85.7" fill="#d2d2d2"/><rect x="105.2" y="638.2" width="0.4" height="85.7" fill="#d6d6d6"/><rect x="148.2" y="638.2" width="0.4" height="85.7" fill="#d6d6d6"/><rect x="123.9" y="638.2" width="1" height="85.7" fill="#8fc7f5"/><path d="M83.4 648.7 H84.4 V652.4 H81.8 V656.3 H83.4" fill="none" stroke="#777" stroke-width="0.35"/><path d="M84.8 656.3 H86 V660 H83.4 V663.8 H85.3" fill="none" stroke="#777" stroke-width="0.35"/><path d="M92.3 663.8 H93.6 V667.6 H90.6 V671.4 H92.9" fill="none" stroke="#777" stroke-width="0.35"/><path d="M157 674.4 H155.6 V679.4 H157" fill="none" stroke="#777" stroke-width="0.35"/><rect x="79.5" y="639.9" width="77.7" height="1.5" rx="0.3" fill="#0b62c8"/><rect x="79.5" y="639.9" width="56" height="1.5" rx="0.3" fill="#17a03c"/><rect x="79.5" y="647.5" width="3.9" height="2.3" rx="0.9" fill="#12b51f"/><rect x="83.4" y="655.5" width="1.4" height="1.6" rx="0.4" fill="#12b51f"/><rect x="85.3" y="662.7" width="7" height="2.3" rx="0.9" fill="#12b51f"/><rect x="92.9" y="670.3" width="64.3" height="2.3" rx="0.3" fill="#0b62c8"/><rect x="92.9" y="670.3" width="42.6" height="2.3" rx="0.9" fill="#12b51f"/><text x="85.3" y="650" textLength="71.7" lengthAdjust="spacingAndGlyphs" font-size="2.7" fill="#4a4a4a">Tom Sheldon; Rich Gannon; Joe Smith; HVAC R Us; Jennifer</text><text x="87.1" y="657.6" textLength="69.9" lengthAdjust="spacingAndGlyphs" font-size="2.7" fill="#4a4a4a">Tom Sheldon; Rich Gannon; Joe Smith; HVAC R Us; Jennif</text><text x="94.7" y="665.1" textLength="62.3" lengthAdjust="spacingAndGlyphs" font-size="2.7" fill="#4a4a4a">Tom Sheldon; Rich Gannon; Joe Smith; HVAC R Us;</text><rect x="28.6" y="640.35" width="1.5" height="1.5" fill="#e6f4fc" stroke="#7dc3e8" stroke-width="0.3"/><rect x="28.6" y="700.25" width="1.5" height="1.5" fill="#e6f4fc" stroke="#7dc3e8" stroke-width="0.3"/><text x="31.3" y="642.4" textLength="19.3" lengthAdjust="spacingAndGlyphs" font-size="2.7" font-weight="bold" fill="#1a1a1a">Start-Up Phase</text><text x="34.9" y="650" textLength="19.8" lengthAdjust="spacingAndGlyphs" font-size="2.7" fill="#4a4a4a">Deploy Software</text><text x="34.9" y="657.6" textLength="27.1" lengthAdjust="spacingAndGlyphs" font-size="2.7" fill="#4a4a4a">Train / Teach Software</text><text x="34.9" y="665.1" textLength="32.4" lengthAdjust="spacingAndGlyphs" font-size="2.7" fill="#4a4a4a">Create Steering Committee</text><text x="34.9" y="671.3" textLength="30" lengthAdjust="spacingAndGlyphs" font-size="2.7" fill="#4a4a4a">Review on Paper Current</text><text x="34.9" y="674.5" textLength="13.3" lengthAdjust="spacingAndGlyphs" font-size="2.7" fill="#4a4a4a">Procedures</text><text x="34.9" y="680.5" textLength="20.9" lengthAdjust="spacingAndGlyphs" font-size="2.7" fill="#4a4a4a">Schedule training</text><text x="34.9" y="688.1" textLength="38.5" lengthAdjust="spacingAndGlyphs" font-size="2.7" fill="#4a4a4a">Training communication pipeline</text><text x="34.9" y="695.7" textLength="28.9" lengthAdjust="spacingAndGlyphs" font-size="2.7" fill="#4a4a4a">Weekly Status Meetings</text><text x="31.3" y="702.3" textLength="24.3" lengthAdjust="spacingAndGlyphs" font-size="2.7" font-weight="bold" fill="#1a1a1a">Assessment Phase</text><text x="34.9" y="707.1" textLength="27.7" lengthAdjust="spacingAndGlyphs" font-size="2.7" fill="#4a4a4a">Asses each element for</text><text x="34.9" y="710.3" textLength="13.3" lengthAdjust="spacingAndGlyphs" font-size="2.7" fill="#4a4a4a">compliance</text><text x="34.9" y="714.8" textLength="38.2" lengthAdjust="spacingAndGlyphs" font-size="2.7" fill="#4a4a4a">Meet with Customer to establish</text><text x="34.9" y="718.1" textLength="21.3" lengthAdjust="spacingAndGlyphs" font-size="2.7" fill="#4a4a4a">their requirements</text><text x="34.9" y="722.9" textLength="23.6" lengthAdjust="spacingAndGlyphs" font-size="2.7" fill="#4a4a4a">Vendor Certification</text></svg>
<div class="b " style="left:40px;top:307.1px;width:129.3px;height:91.2px;border:2.9px solid #a6cff8;border-left:none;border-radius:0 4.5px 4.5px 0;"></div>
<div class="b " style="left:234.6px;top:68.4px;width:985.4px;height:741.6px;background:#fff;"></div>
<div class="b " style="left:270.4px;top:145.4px;width:949.6px;height:74.9px;background:#edf3fe;"></div>
<div class="b " style="left:270.4px;top:261.4px;width:949.6px;height:41.3px;background:#edf3fe;"></div>
<div class="b " style="left:270.4px;top:343.8px;width:949.6px;height:24.7px;background:#edf3fe;"></div>
<div class="b " style="left:270.4px;top:398.4px;width:949.6px;height:41.6px;background:#edf3fe;"></div>
<div class="b " style="left:270.4px;top:469.4px;width:949.6px;height:41.4px;background:#edf3fe;"></div>
<div class="b " style="left:270.4px;top:540.1px;width:949.6px;height:29.7px;background:#edf3fe;"></div>
<div class="b " style="left:270.4px;top:599.5px;width:949.6px;height:29.6px;background:#edf3fe;"></div>
<div class="b " style="left:270.4px;top:658.8px;width:949.6px;height:29.6px;background:#edf3fe;"></div>
<div class="b " style="left:270.4px;top:343.8px;width:949.6px;height:25.3px;background:#a9dbff;border-top:1.2px solid #3397ea;border-bottom:1.2px solid #3397ea;"></div>
<div class="b " style="left:284.4px;top:343.8px;width:198.6px;height:25.3px;background:#7fcaf8;border:1.2px solid #3b9fe6;"></div>
<div class="b " style="left:234.6px;top:104.5px;width:35.8px;height:613.6px;background:#ebebeb;"></div>
<div class="b " style="left:270.4px;top:145px;width:949.6px;height:1px;background:#d9d9d9;"></div>
<div class="b " style="left:234.6px;top:145px;width:35.8px;height:1px;background:#a9a9a9;"></div>
<div class="b " style="left:270.4px;top:219.9px;width:949.6px;height:1px;background:#d9d9d9;"></div>
<div class="b " style="left:234.6px;top:219.9px;width:35.8px;height:1px;background:#a9a9a9;"></div>
<div class="b " style="left:270.4px;top:261px;width:949.6px;height:1px;background:#d9d9d9;"></div>
<div class="b " style="left:234.6px;top:261px;width:35.8px;height:1px;background:#a9a9a9;"></div>
<div class="b " style="left:270.4px;top:302.3px;width:949.6px;height:1px;background:#d9d9d9;"></div>
<div class="b " style="left:234.6px;top:302.3px;width:35.8px;height:1px;background:#a9a9a9;"></div>
<div class="b " style="left:234.6px;top:343.4px;width:35.8px;height:1px;background:#a9a9a9;"></div>
<div class="b " style="left:234.6px;top:368.1px;width:35.8px;height:1px;background:#a9a9a9;"></div>
<div class="b " style="left:270.4px;top:398px;width:949.6px;height:1px;background:#d9d9d9;"></div>
<div class="b " style="left:234.6px;top:398px;width:35.8px;height:1px;background:#a9a9a9;"></div>
<div class="b " style="left:270.4px;top:439.6px;width:949.6px;height:1px;background:#d9d9d9;"></div>
<div class="b " style="left:234.6px;top:439.6px;width:35.8px;height:1px;background:#a9a9a9;"></div>
<div class="b " style="left:270.4px;top:469px;width:949.6px;height:1px;background:#d9d9d9;"></div>
<div class="b " style="left:234.6px;top:469px;width:35.8px;height:1px;background:#a9a9a9;"></div>
<div class="b " style="left:270.4px;top:510.4px;width:949.6px;height:1px;background:#d9d9d9;"></div>
<div class="b " style="left:234.6px;top:510.4px;width:35.8px;height:1px;background:#a9a9a9;"></div>
<div class="b " style="left:270.4px;top:539.7px;width:949.6px;height:1px;background:#d9d9d9;"></div>
<div class="b " style="left:234.6px;top:539.7px;width:35.8px;height:1px;background:#a9a9a9;"></div>
<div class="b " style="left:270.4px;top:569.4px;width:949.6px;height:1px;background:#d9d9d9;"></div>
<div class="b " style="left:234.6px;top:569.4px;width:35.8px;height:1px;background:#a9a9a9;"></div>
<div class="b " style="left:270.4px;top:599.1px;width:949.6px;height:1px;background:#d9d9d9;"></div>
<div class="b " style="left:234.6px;top:599.1px;width:35.8px;height:1px;background:#a9a9a9;"></div>
<div class="b " style="left:270.4px;top:628.7px;width:949.6px;height:1px;background:#d9d9d9;"></div>
<div class="b " style="left:234.6px;top:628.7px;width:35.8px;height:1px;background:#a9a9a9;"></div>
<div class="b " style="left:270.4px;top:658.4px;width:949.6px;height:1px;background:#d9d9d9;"></div>
<div class="b " style="left:234.6px;top:658.4px;width:35.8px;height:1px;background:#a9a9a9;"></div>
<div class="b " style="left:270.4px;top:688px;width:949.6px;height:1px;background:#d9d9d9;"></div>
<div class="b " style="left:234.6px;top:688px;width:35.8px;height:1px;background:#a9a9a9;"></div>
<div class="b " style="left:270.4px;top:717.7px;width:949.6px;height:1px;background:#d9d9d9;"></div>
<div class="b " style="left:234.6px;top:717.7px;width:35.8px;height:1px;background:#a9a9a9;"></div>
<div class="b " style="left:234.2px;top:68.4px;width:1.1px;height:650px;background:#b4b4b4;"></div>
<div class="b " style="left:269.9px;top:104.5px;width:1.1px;height:613.9px;background:#9c9c9c;"></div>
<div class="b " style="left:284px;top:104.5px;width:1px;height:613.9px;background:#d6d6d6;"></div>
<div class="b " style="left:482px;top:104.5px;width:1px;height:613.9px;background:#d0d0d0;"></div>
<div class="b " style="left:544.1px;top:104.5px;width:0.8px;height:613.9px;background:#d9d9d9;"></div>
<div class="b " style="left:544.1px;top:718.4px;width:0.8px;height:91.6px;background:#ebebeb;"></div>
<div class="b " style="left:545.3px;top:104.5px;width:0.7px;height:613.9px;background:#dedede;"></div>
<div class="b " style="left:545.3px;top:718.4px;width:0.7px;height:91.6px;background:#efefef;"></div>
<div class="b " style="left:234.6px;top:68.4px;width:985.4px;height:36.1px;background:#ebebeb;border-top:1px solid #c9c9c9;"></div>
<div class="b " style="left:234.6px;top:103.9px;width:310.4px;height:1.1px;background:#9a9a9a;"></div>
<div class="b " style="left:269.9px;top:69px;width:1.1px;height:35.5px;background:#8f8f8f;"></div>
<div class="b " style="left:283.9px;top:69px;width:1.1px;height:35.5px;background:#9d9d9d;"></div>
<div class="b " style="left:481.9px;top:69px;width:1.1px;height:35.5px;background:#9d9d9d;"></div>
<div class="b " style="left:544.5px;top:69px;width:1.1px;height:35.5px;background:#a3a3a3;"></div>
<div class="t " style="font-size:10.72px;left:152.3px;width:200px;text-align:center;top:80px;font-style:italic;font-weight:bold;font-size:10px;">#</div>
<div class="t " style="font-size:10.72px;left:283px;width:200px;text-align:center;top:80px;">Name</div>
<div class="t " style="font-size:10.72px;left:413.6px;width:200px;text-align:center;top:80px;">Duration</div>
<div class="t " style="font-size:10.72px;left:68.6px;width:200px;text-align:right;top:118px;">1</div>
<svg class="b" style="left:271px;top:119px;" width="14" height="14" viewBox="-0.5 -0.15 14 14"><path d="M3 -0.2 V4.9 M0.45 2.35 H5.55" stroke="#585858" stroke-width="1.25"/>
<g fill="none" stroke="#666" stroke-width="1.1"><ellipse cx="4.5" cy="7.75" rx="2.35" ry="1.35" transform="rotate(-42 4.5 7.75)"/><ellipse cx="8.4" cy="4.15" rx="2.35" ry="1.35" transform="rotate(-42 8.4 4.15)"/></g></svg>
<div class="t " style="font-size:10.72px;font-weight:bold;left:301.2px;top:112px;">Psi Sigma, English Society</div>
<div class="t " style="font-size:10.72px;font-weight:bold;left:301.2px;top:124px;">Quarterly Journal</div>
<div class="t " style="font-size:10.72px;font-weight:bold;left:343.2px;width:200px;text-align:right;top:118px;">46 d</div>
<div class="t " style="font-size:10.72px;left:68.6px;width:200px;text-align:right;top:176px;">2</div>
<svg class="b" style="left:271px;top:177px;" width="14" height="14" viewBox="-0.5 -0.05 14 14"><path d="M3 -0.2 V4.9 M0.45 2.35 H5.55" stroke="#585858" stroke-width="1.25"/>
<g fill="none" stroke="#666" stroke-width="1.1"><ellipse cx="4.5" cy="7.75" rx="2.35" ry="1.35" transform="rotate(-42 4.5 7.75)"/><ellipse cx="8.4" cy="4.15" rx="2.35" ry="1.35" transform="rotate(-42 8.4 4.15)"/></g></svg>
<div class="t " style="font-size:10.72px;font-weight:bold;left:315.5px;top:157px;">Meetings (Writer, Editor,</div>
<div class="t " style="font-size:10.72px;font-weight:bold;left:315.5px;top:170px;">Designer, Produciton</div>
<div class="t " style="font-size:10.72px;font-weight:bold;left:315.5px;top:182px;">Coordinator &amp; Client Relations</div>
<div class="t " style="font-size:10.72px;font-weight:bold;left:315.5px;top:195px;">Manager)</div>
<div class="t " style="font-size:10.72px;font-weight:bold;left:343.2px;width:200px;text-align:right;top:176px;">22 d</div>
<div class="t " style="font-size:10.72px;left:68.6px;width:200px;text-align:right;top:234px;">3</div>
<svg class="b" style="left:271px;top:235px;" width="14" height="14" viewBox="-0.5 -0.05 14 14"><path d="M3 -0.2 V4.9 M0.45 2.35 H5.55" stroke="#585858" stroke-width="1.25"/>
<g fill="none" stroke="#666" stroke-width="1.1"><ellipse cx="4.5" cy="7.75" rx="2.35" ry="1.35" transform="rotate(-42 4.5 7.75)"/><ellipse cx="8.4" cy="4.15" rx="2.35" ry="1.35" transform="rotate(-42 8.4 4.15)"/></g></svg>
<div class="t " style="font-size:10.72px;left:329.7px;top:234px;">1</div>
<div class="t " style="font-size:10.72px;left:68.6px;width:200px;text-align:right;top:275px;">4</div>
<svg class="b" style="left:271px;top:276px;" width="14" height="14" viewBox="-0.5 -0.25 14 14"><path d="M3 -0.2 V4.9 M0.45 2.35 H5.55" stroke="#585858" stroke-width="1.25"/>
<g fill="none" stroke="#666" stroke-width="1.1"><ellipse cx="4.5" cy="7.75" rx="2.35" ry="1.35" transform="rotate(-42 4.5 7.75)"/><ellipse cx="8.4" cy="4.15" rx="2.35" ry="1.35" transform="rotate(-42 8.4 4.15)"/></g></svg>
<div class="t " style="font-size:10.72px;left:329.7px;top:275px;">2</div>
<div class="t " style="font-size:10.72px;left:68.6px;width:200px;text-align:right;top:316px;">5</div>
<svg class="b" style="left:271px;top:317px;" width="14" height="14" viewBox="-0.5 -0.45 14 14"><path d="M3 -0.2 V4.9 M0.45 2.35 H5.55" stroke="#585858" stroke-width="1.25"/>
<g fill="none" stroke="#666" stroke-width="1.1"><ellipse cx="4.5" cy="7.75" rx="2.35" ry="1.35" transform="rotate(-42 4.5 7.75)"/><ellipse cx="8.4" cy="4.15" rx="2.35" ry="1.35" transform="rotate(-42 8.4 4.15)"/></g></svg>
<div class="t " style="font-size:10.72px;left:329.7px;top:316px;">3</div>
<div class="t " style="font-size:10.72px;left:68.6px;width:200px;text-align:right;top:349px;">6</div>
<svg class="b" style="left:271px;top:350px;" width="14" height="14" viewBox="-0.5 -0.35 14 14"><path d="M3 -0.2 V4.9 M0.45 2.35 H5.55" stroke="#585858" stroke-width="1.25"/>
<g fill="none" stroke="#666" stroke-width="1.1"><ellipse cx="4.5" cy="7.75" rx="2.35" ry="1.35" transform="rotate(-42 4.5 7.75)"/><ellipse cx="8.4" cy="4.15" rx="2.35" ry="1.35" transform="rotate(-42 8.4 4.15)"/></g></svg>
<div class="t " style="font-size:10.72px;color:#1b6b98;left:315.5px;top:349px;">Submit Copy, Photos &amp; Artwork</div>
<div class="t " style="font-size:10.72px;color:#1d4868;left:343.2px;width:200px;text-align:right;top:349px;">4 d</div>
<div class="t " style="font-size:10.72px;left:68.6px;width:200px;text-align:right;top:377px;">7</div>
<svg class="b" style="left:271px;top:377px;" width="14" height="14" viewBox="-0.5 -0.65 14 14"><path d="M3 -0.2 V4.9 M0.45 2.35 H5.55" stroke="#585858" stroke-width="1.25"/>
<g fill="none" stroke="#666" stroke-width="1.1"><ellipse cx="4.5" cy="7.75" rx="2.35" ry="1.35" transform="rotate(-42 4.5 7.75)"/><ellipse cx="8.4" cy="4.15" rx="2.35" ry="1.35" transform="rotate(-42 8.4 4.15)"/></g></svg>
<div class="t " style="font-size:10.72px;left:315.5px;top:377px;">First Draft Due Date</div>
<div class="t " style="font-size:10.72px;left:343.2px;width:200px;text-align:right;top:377px;">3 d</div>
<div class="t " style="font-size:10.72px;left:68.6px;width:200px;text-align:right;top:412px;">8</div>
<svg class="b" style="left:271px;top:413px;" width="14" height="14" viewBox="-0.5 -0.4 14 14"><path d="M3 -0.2 V4.9 M0.45 2.35 H5.55" stroke="#585858" stroke-width="1.25"/>
<g fill="none" stroke="#666" stroke-width="1.1"><ellipse cx="4.5" cy="7.75" rx="2.35" ry="1.35" transform="rotate(-42 4.5 7.75)"/><ellipse cx="8.4" cy="4.15" rx="2.35" ry="1.35" transform="rotate(-42 8.4 4.15)"/></g></svg>
<div class="t " style="font-size:10.72px;left:315.5px;top:412px;">Writer/Editor - First Draft Changes</div>
<div class="t " style="font-size:10.72px;left:343.2px;width:200px;text-align:right;top:412px;">2 d</div>
<div class="t " style="font-size:10.72px;left:68.6px;width:200px;text-align:right;top:448px;">9</div>
<svg class="b" style="left:271px;top:448px;" width="14" height="14" viewBox="-0.5 -0.9 14 14"><path d="M3 -0.2 V4.9 M0.45 2.35 H5.55" stroke="#585858" stroke-width="1.25"/>
<g fill="none" stroke="#666" stroke-width="1.1"><ellipse cx="4.5" cy="7.75" rx="2.35" ry="1.35" transform="rotate(-42 4.5 7.75)"/><ellipse cx="8.4" cy="4.15" rx="2.35" ry="1.35" transform="rotate(-42 8.4 4.15)"/></g></svg>
<div class="t " style="font-size:10.72px;left:315.5px;top:448px;">Designer Creates Layout</div>
<div class="t " style="font-size:10.72px;left:343.2px;width:200px;text-align:right;top:448px;">3 d</div>
<div class="t " style="font-size:10.72px;left:68.6px;width:200px;text-align:right;top:483px;">10</div>
<svg class="b" style="left:271px;top:484px;" width="14" height="14" viewBox="-0.5 -0.3 14 14"><path d="M3 -0.2 V4.9 M0.45 2.35 H5.55" stroke="#585858" stroke-width="1.25"/>
<g fill="none" stroke="#666" stroke-width="1.1"><ellipse cx="4.5" cy="7.75" rx="2.35" ry="1.35" transform="rotate(-42 4.5 7.75)"/><ellipse cx="8.4" cy="4.15" rx="2.35" ry="1.35" transform="rotate(-42 8.4 4.15)"/></g></svg>
<div class="t " style="font-size:10.72px;left:315.5px;top:477px;">Determine Printing Estimate &amp;</div>
<div class="t " style="font-size:10.72px;left:315.5px;top:489px;">Delivery instructions</div>
<div class="t " style="font-size:10.72px;left:343.2px;width:200px;text-align:right;top:483px;">4 d</div>
<div class="t " style="font-size:10.72px;left:68.6px;width:200px;text-align:right;top:519px;">11</div>
<svg class="b" style="left:271px;top:519px;" width="14" height="14" viewBox="-0.5 -0.65 14 14"><path d="M3 -0.2 V4.9 M0.45 2.35 H5.55" stroke="#585858" stroke-width="1.25"/>
<g fill="none" stroke="#666" stroke-width="1.1"><ellipse cx="4.5" cy="7.75" rx="2.35" ry="1.35" transform="rotate(-42 4.5 7.75)"/><ellipse cx="8.4" cy="4.15" rx="2.35" ry="1.35" transform="rotate(-42 8.4 4.15)"/></g></svg>
<div class="t " style="font-size:10.72px;left:315.5px;top:519px;">Layout Approval</div>
<div class="t " style="font-size:10.72px;left:343.2px;width:200px;text-align:right;top:519px;">2 d</div>
<div class="t " style="font-size:10.72px;left:68.6px;width:200px;text-align:right;top:548px;">12</div>
<svg class="b" style="left:271px;top:549px;" width="14" height="14" viewBox="-0.5 -0.15 14 14"><path d="M3 -0.2 V4.9 M0.45 2.35 H5.55" stroke="#585858" stroke-width="1.25"/>
<g fill="none" stroke="#666" stroke-width="1.1"><ellipse cx="4.5" cy="7.75" rx="2.35" ry="1.35" transform="rotate(-42 4.5 7.75)"/><ellipse cx="8.4" cy="4.15" rx="2.35" ry="1.35" transform="rotate(-42 8.4 4.15)"/></g></svg>
<div class="t " style="font-size:10.72px;left:315.5px;top:548px;">Second Draft Changes Made</div>
<div class="t " style="font-size:10.72px;left:343.2px;width:200px;text-align:right;top:548px;">2 d</div>
<div class="t " style="font-size:10.72px;left:68.6px;width:200px;text-align:right;top:578px;">13</div>
<svg class="b" style="left:271px;top:578px;" width="14" height="14" viewBox="-0.5 -0.85 14 14"><path d="M3 -0.2 V4.9 M0.45 2.35 H5.55" stroke="#585858" stroke-width="1.25"/>
<g fill="none" stroke="#666" stroke-width="1.1"><ellipse cx="4.5" cy="7.75" rx="2.35" ry="1.35" transform="rotate(-42 4.5 7.75)"/><ellipse cx="8.4" cy="4.15" rx="2.35" ry="1.35" transform="rotate(-42 8.4 4.15)"/></g></svg>
<div class="t " style="font-size:10.72px;left:315.5px;top:578px;">Update Mailing List</div>
<div class="t " style="font-size:10.72px;left:343.2px;width:200px;text-align:right;top:578px;">1 d</div>
<div class="t " style="font-size:10.72px;left:68.6px;width:200px;text-align:right;top:607px;">14</div>
<svg class="b" style="left:271px;top:608px;" width="14" height="14" viewBox="-0.5 -0.5 14 14"><path d="M3 -0.2 V4.9 M0.45 2.35 H5.55" stroke="#585858" stroke-width="1.25"/>
<g fill="none" stroke="#666" stroke-width="1.1"><ellipse cx="4.5" cy="7.75" rx="2.35" ry="1.35" transform="rotate(-42 4.5 7.75)"/><ellipse cx="8.4" cy="4.15" rx="2.35" ry="1.35" transform="rotate(-42 8.4 4.15)"/></g></svg>
<div class="t " style="font-size:10.72px;left:315.5px;top:607px;">Final Proofreading</div>
<div class="t " style="font-size:10.72px;left:343.2px;width:200px;text-align:right;top:607px;">2 d</div>
<div class="t " style="font-size:10.72px;left:68.6px;width:200px;text-align:right;top:637px;">15</div>
<svg class="b" style="left:271px;top:638px;" width="14" height="14" viewBox="-0.5 -0.15 14 14"><path d="M3 -0.2 V4.9 M0.45 2.35 H5.55" stroke="#585858" stroke-width="1.25"/>
<g fill="none" stroke="#666" stroke-width="1.1"><ellipse cx="4.5" cy="7.75" rx="2.35" ry="1.35" transform="rotate(-42 4.5 7.75)"/><ellipse cx="8.4" cy="4.15" rx="2.35" ry="1.35" transform="rotate(-42 8.4 4.15)"/></g></svg>
<div class="t " style="font-size:10.72px;left:315.5px;top:637px;">Publication to Printer</div>
<div class="t " style="font-size:10.72px;left:343.2px;width:200px;text-align:right;top:637px;">1 d</div>
<div class="t " style="font-size:10.72px;left:68.6px;width:200px;text-align:right;top:667px;">16</div>
<svg class="b" style="left:271px;top:667px;" width="14" height="14" viewBox="-0.5 -0.8 14 14"><path d="M3 -0.2 V4.9 M0.45 2.35 H5.55" stroke="#585858" stroke-width="1.25"/>
<g fill="none" stroke="#666" stroke-width="1.1"><ellipse cx="4.5" cy="7.75" rx="2.35" ry="1.35" transform="rotate(-42 4.5 7.75)"/><ellipse cx="8.4" cy="4.15" rx="2.35" ry="1.35" transform="rotate(-42 8.4 4.15)"/></g></svg>
<div class="t " style="font-size:10.72px;left:315.5px;top:667px;">Finish/Mailing</div>
<div class="t " style="font-size:10.72px;left:343.2px;width:200px;text-align:right;top:667px;">1 d</div>
<div class="t " style="font-size:10.72px;left:68.6px;width:200px;text-align:right;top:696px;">17</div>
<svg class="b" style="left:271px;top:697px;" width="14" height="14" viewBox="-0.5 -0.45 14 14"><path d="M3 -0.2 V4.9 M0.45 2.35 H5.55" stroke="#585858" stroke-width="1.25"/>
<g fill="none" stroke="#666" stroke-width="1.1"><ellipse cx="4.5" cy="7.75" rx="2.35" ry="1.35" transform="rotate(-42 4.5 7.75)"/><ellipse cx="8.4" cy="4.15" rx="2.35" ry="1.35" transform="rotate(-42 8.4 4.15)"/></g></svg>
<div class="t " style="font-size:10.72px;left:301.2px;top:696px;">NSU Honors Program Newsletter</div>
<svg class="b" style="left:288px;top:120px;" width="11" height="11" viewBox="-0.7 -0.4 11 11"><rect x="0.6" y="0.6" width="7.3" height="7.3" fill="#fff" stroke="#4f9fd0" stroke-width="1"/><path d="M2.3 4.25 H6.2" stroke="#4f9fd0" stroke-width="1"/></svg>
<svg class="b" style="left:303px;top:178px;" width="10" height="11" viewBox="0 -0.3 10 11"><rect x="0.6" y="0.6" width="7.3" height="7.3" fill="#fff" stroke="#4f9fd0" stroke-width="1"/><path d="M2.3 4.25 H6.2" stroke="#4f9fd0" stroke-width="1"/></svg>
<div class="b " style="left:602px;top:104.5px;width:1.1px;height:705.5px;background:#b9b9b9;"></div>
<div class="b " style="left:853px;top:104.5px;width:1.1px;height:705.5px;background:#b9b9b9;"></div>
<div class="b " style="left:1112.5px;top:104.5px;width:1.1px;height:705.5px;background:#b9b9b9;"></div>
<div class="b " style="left:545.6px;top:85.9px;width:674.4px;height:1.1px;background:#a0a0a0;"></div>
<div class="b " style="left:602px;top:69px;width:1.1px;height:35.5px;background:#9f9f9f;"></div>
<div class="b " style="left:853px;top:69px;width:1.1px;height:35.5px;background:#9f9f9f;"></div>
<div class="b " style="left:1112.5px;top:69px;width:1.1px;height:17px;background:#9f9f9f;"></div>
<div class="b " style="left:551.8px;top:87px;width:1.1px;height:17.5px;background:#a6a6a6;"></div>
<div class="t hd" style="font-size:8.8px;left:464.9px;width:200px;text-align:center;top:89px;">26</div>
<div class="b " style="left:576.9px;top:87px;width:1.1px;height:17.5px;background:#a6a6a6;"></div>
<div class="t hd" style="font-size:8.8px;left:490px;width:200px;text-align:center;top:89px;">29</div>
<div class="t hd" style="font-size:8.8px;left:515.1px;width:200px;text-align:center;top:89px;">01</div>
<div class="b " style="left:627.1px;top:87px;width:1.1px;height:17.5px;background:#a6a6a6;"></div>
<div class="t hd" style="font-size:8.8px;left:540.2px;width:200px;text-align:center;top:89px;">04</div>
<div class="b " style="left:652.2px;top:87px;width:1.1px;height:17.5px;background:#a6a6a6;"></div>
<div class="t hd" style="font-size:8.8px;left:565.3px;width:200px;text-align:center;top:89px;">07</div>
<div class="b " style="left:677.3px;top:87px;width:1.1px;height:17.5px;background:#a6a6a6;"></div>
<div class="t hd" style="font-size:8.8px;left:590.4px;width:200px;text-align:center;top:89px;">10</div>
<div class="b " style="left:702.4px;top:87px;width:1.1px;height:17.5px;background:#a6a6a6;"></div>
<div class="t hd" style="font-size:8.8px;left:615.5px;width:200px;text-align:center;top:89px;">13</div>
<div class="b " style="left:727.5px;top:87px;width:1.1px;height:17.5px;background:#a6a6a6;"></div>
<div class="t hd" style="font-size:8.8px;left:640.6px;width:200px;text-align:center;top:89px;">16</div>
<div class="b " style="left:752.6px;top:87px;width:1.1px;height:17.5px;background:#a6a6a6;"></div>
<div class="t hd" style="font-size:8.8px;left:665.7px;width:200px;text-align:center;top:89px;">19</div>
<div class="b " style="left:777.7px;top:87px;width:1.1px;height:17.5px;background:#a6a6a6;"></div>
<div class="t hd" style="font-size:8.8px;left:690.8px;width:200px;text-align:center;top:89px;">22</div>
<div class="b " style="left:802.8px;top:87px;width:1.1px;height:17.5px;background:#a6a6a6;"></div>
<div class="t hd" style="font-size:8.8px;left:715.9px;width:200px;text-align:center;top:89px;">25</div>
<div class="b " style="left:827.9px;top:87px;width:1.1px;height:17.5px;background:#a6a6a6;"></div>
<div class="t hd" style="font-size:8.8px;left:741px;width:200px;text-align:center;top:89px;">28</div>
<div class="t hd" style="font-size:8.8px;left:766.1px;width:200px;text-align:center;top:89px;">01</div>
<div class="b " style="left:878.1px;top:87px;width:1.1px;height:17.5px;background:#a6a6a6;"></div>
<div class="t hd" style="font-size:8.8px;left:791.2px;width:200px;text-align:center;top:89px;">04</div>
<div class="b " style="left:903.2px;top:87px;width:1.1px;height:17.5px;background:#a6a6a6;"></div>
<div class="t hd" style="font-size:8.8px;left:816.3px;width:200px;text-align:center;top:89px;">07</div>
<div class="b " style="left:928.3px;top:87px;width:1.1px;height:17.5px;background:#a6a6a6;"></div>
<div class="t hd" style="font-size:8.8px;left:841.4px;width:200px;text-align:center;top:89px;">10</div>
<div class="b " style="left:953.4px;top:87px;width:1.1px;height:17.5px;background:#a6a6a6;"></div>
<div class="t hd" style="font-size:8.8px;left:866.5px;width:200px;text-align:center;top:89px;">13</div>
<div class="b " style="left:978.5px;top:87px;width:1.1px;height:17.5px;background:#a6a6a6;"></div>
<div class="t hd" style="font-size:8.8px;left:891.6px;width:200px;text-align:center;top:89px;">16</div>
<div class="b " style="left:1003.6px;top:87px;width:1.1px;height:17.5px;background:#a6a6a6;"></div>
<div class="t hd" style="font-size:8.8px;left:916.7px;width:200px;text-align:center;top:89px;">19</div>
<div class="b " style="left:1028.7px;top:87px;width:1.1px;height:17.5px;background:#a6a6a6;"></div>
<div class="t hd" style="font-size:8.8px;left:941.8px;width:200px;text-align:center;top:89px;">22</div>
<div class="b " style="left:1053.8px;top:87px;width:1.1px;height:17.5px;background:#a6a6a6;"></div>
<div class="t hd" style="font-size:8.8px;left:966.9px;width:200px;text-align:center;top:89px;">25</div>
<div class="b " style="left:1078.9px;top:87px;width:1.1px;height:17.5px;background:#a6a6a6;"></div>
<div class="t hd" style="font-size:8.8px;left:992px;width:200px;text-align:center;top:89px;">28</div>
<div class="b " style="left:1104px;top:87px;width:1.1px;height:17.5px;background:#a6a6a6;"></div>
<div class="t hd" style="font-size:8.8px;left:1017.1px;width:200px;text-align:center;top:89px;">31</div>
<div class="b " style="left:1129.1px;top:87px;width:1.1px;height:17.5px;background:#a6a6a6;"></div>
<div class="t hd" style="font-size:8.8px;left:1042.2px;width:200px;text-align:center;top:89px;">03</div>
<div class="b " style="left:1154.2px;top:87px;width:1.1px;height:17.5px;background:#a6a6a6;"></div>
<div class="t hd" style="font-size:8.8px;left:1067.3px;width:200px;text-align:center;top:89px;">06</div>
<div class="b " style="left:1179.3px;top:87px;width:1.1px;height:17.5px;background:#a6a6a6;"></div>
<div class="t hd" style="font-size:8.8px;left:1092.4px;width:200px;text-align:center;top:89px;">09</div>
<div class="b " style="left:1204.4px;top:87px;width:1.1px;height:17.5px;background:#a6a6a6;"></div>
<div class="t hd" style="font-size:8.8px;left:1117.5px;width:200px;text-align:center;top:89px;">12</div>
<div class="t hd" style="font-size:8.8px;left:607.2px;top:71px;">April 2018</div>
<div class="t hd" style="font-size:8.8px;left:858.2px;top:71px;">May 2018</div>
<div class="t hd" style="font-size:8.8px;left:1117.7px;top:71px;">June 2018</div>
<div class="b " style="left:748.9px;top:104.5px;width:1.1px;height:705.5px;background:#4a9ae8;"></div>
<div class="b" style="left:545px;top:104px;width:675px;height:706px;overflow:hidden">
<svg class="b" style="left:0;top:0" width="675" height="706" viewBox="545 104 675 706">
<rect x="569.2" y="120.3" width="535.2" height="5.4" fill="#0560bf"/><rect x="569.2" y="120.3" width="10" height="5.4" fill="#2e9b4a"/><path d="M569.2 125.7 V128.8 L572.4 125.7z" fill="#4d5a66"/><path d="M1104.4 125.7 V128.8 L1101.2 125.7z" fill="#4d5a66"/><rect x="569.2" y="177.6" width="251" height="5.4" fill="#0560bf"/><path d="M569.2 183 V186.2 L572.4 183z" fill="#4d5a66"/><path d="M820.2 183 V186.2 L817 183z" fill="#4d5a66"/><path d="M573 240.5 H646.9 Q648.5 240.5 648.5 242.1 V280.9 Q648.5 282.5 650.1 282.5 H728.3" fill="none" stroke="#4c4c4c" stroke-width="1.12"/><path d="M731.3 282.5 L727.1 280.2 L727.1 284.8z" fill="#444"/><path d="M740 281.5 H772.9 Q774.5 281.5 774.5 283.1 V321.9 Q774.5 323.5 776.1 323.5 H812.5" fill="none" stroke="#4c4c4c" stroke-width="1.12"/><path d="M815.5 323.5 L811.3 321.2 L811.3 325.8z" fill="#444"/><path d="M824.5 323.5 H830.9 Q832.5 323.5 832.5 325.1 V354.9 Q832.5 356.5 834.1 356.5 H842.5" fill="none" stroke="#4c4c4c" stroke-width="1.12"/><path d="M845.5 356.5 L841.3 354.2 L841.3 358.8z" fill="#444"/><path d="M569 235.9 L573.7 240.6 L569 245.3 L564.3 240.6z" fill="#ff8a0c"/><path d="M735.9 276.8 L740.6 281.5 L735.9 286.2 L731.2 281.5z" fill="#ff8a0c"/><path d="M820 318.4 L824.7 323.1 L820 327.8 L815.3 323.1z" fill="#ff8a0c"/><rect x="845.4" y="352.2" width="30.4" height="8.6" fill="#0560bf"/><rect x="845.4" y="352.2" width="1" height="8.6" fill="#2b78cc"/><rect x="874.8" y="352.2" width="1" height="8.6" fill="#2b78cc"/><rect x="845.4" y="352.2" width="3.1" height="8.6" fill="#10b818"/><path d="M875.8 356.5 H878.9 Q880.5 356.5 880.5 358.1 V364.9 Q880.5 366.5 878.9 366.5 H870.1 Q868.5 366.5 868.5 368.1 V381.9 Q868.5 383.5 870.1 383.5 H876" fill="none" stroke="#4c4c4c" stroke-width="1.12"/><path d="M879 383.5 L874.8 381.2 L874.8 385.8z" fill="#444"/><rect x="878.9" y="379.3" width="41.6" height="8.4" fill="#0560bf"/><rect x="878.9" y="379.3" width="1" height="8.4" fill="#2b78cc"/><rect x="919.5" y="379.3" width="1" height="8.4" fill="#2b78cc"/><path d="M920.5 383.5 H922.9 Q924.5 383.5 924.5 385.1 V395.9 Q924.5 397.5 922.9 397.5 H912.1 Q910.5 397.5 910.5 399.1 V417.9 Q910.5 419.5 912.1 419.5 H917.8" fill="none" stroke="#4c4c4c" stroke-width="1.12"/><path d="M920.8 419.5 L916.6 417.2 L916.6 421.8z" fill="#444"/><rect x="920.7" y="415" width="16" height="8.6" fill="#0560bf"/><rect x="920.7" y="415" width="1" height="8.6" fill="#2b78cc"/><rect x="935.7" y="415" width="1" height="8.6" fill="#2b78cc"/><path d="M936.7 419.5 H938.9 Q940.5 419.5 940.5 421.1 V431.9 Q940.5 433.5 938.9 433.5 H928.1 Q926.5 433.5 926.5 435.1 V452.9 Q926.5 454.5 928.1 454.5 H934.1" fill="none" stroke="#4c4c4c" stroke-width="1.12"/><path d="M937.1 454.5 L932.9 452.2 L932.9 456.8z" fill="#444"/><rect x="937" y="450.5" width="41.9" height="8.3" fill="#0560bf"/><rect x="937" y="450.5" width="1" height="8.3" fill="#2b78cc"/><rect x="977.9" y="450.5" width="1" height="8.3" fill="#2b78cc"/><path d="M978.9 454.5 H980.9 Q982.5 454.5 982.5 456.1 V466.9 Q982.5 468.5 980.9 468.5 H970.1 Q968.5 468.5 968.5 470.1 V488.9 Q968.5 490.5 970.1 490.5 H976.2" fill="none" stroke="#4c4c4c" stroke-width="1.12"/><path d="M979.2 490.5 L975 488.2 L975 492.8z" fill="#444"/><path d="M968.5 488 V553.9 Q968.5 555.5 970.1 555.5 H976.2" fill="none" stroke="#4c4c4c" stroke-width="1.12"/><path d="M979.3 555.5 L975.1 553.2 L975.1 557.8z" fill="#444"/><rect x="979.1" y="485.9" width="47.3" height="8.6" fill="#0560bf"/><rect x="979.1" y="485.9" width="1" height="8.6" fill="#2b78cc"/><rect x="1025.4" y="485.9" width="1" height="8.6" fill="#2b78cc"/><path d="M1026.4 490.5 H1028.9 Q1030.5 490.5 1030.5 492.1 V502.9 Q1030.5 504.5 1028.9 504.5 H1020.1 Q1018.5 504.5 1018.5 506.1 V523.9 Q1018.5 525.5 1020.1 525.5 H1026.2" fill="none" stroke="#4c4c4c" stroke-width="1.12"/><path d="M1029.2 525.5 L1025 523.2 L1025 527.8z" fill="#444"/><rect x="1029.1" y="520.9" width="17.2" height="8.5" fill="#0560bf"/><rect x="1029.1" y="520.9" width="1" height="8.5" fill="#2b78cc"/><rect x="1045.3" y="520.9" width="1" height="8.5" fill="#2b78cc"/><path d="M1046.3 524.5 H1048.9 Q1050.5 524.5 1050.5 526.1 V548.9 Q1050.5 550.5 1048.9 550.5 H1038.1 Q1036.5 550.5 1036.5 552.1 V582.9 Q1036.5 584.5 1038.1 584.5 H1043.4" fill="none" stroke="#4c4c4c" stroke-width="1.12"/><path d="M1046.4 584.5 L1042.2 582.2 L1042.2 586.8z" fill="#444"/><rect x="979.2" y="550.2" width="16.6" height="8.7" fill="#0560bf"/><rect x="979.2" y="550.2" width="1" height="8.7" fill="#2b78cc"/><rect x="994.8" y="550.2" width="1" height="8.7" fill="#2b78cc"/><rect x="1046.3" y="580" width="7.8" height="8.5" fill="#0560bf"/><rect x="1046.3" y="580" width="1" height="8.5" fill="#2b78cc"/><rect x="1053.1" y="580" width="1" height="8.5" fill="#2b78cc"/><path d="M1054.1 584.5 H1056.9 Q1058.5 584.5 1058.5 586.1 V593.9 Q1058.5 595.5 1056.9 595.5 H1045.1 Q1043.5 595.5 1043.5 597.1 V612.9 Q1043.5 614.5 1045.1 614.5 H1051.7" fill="none" stroke="#4c4c4c" stroke-width="1.12"/><path d="M1054.7 614.5 L1050.5 612.2 L1050.5 616.8z" fill="#444"/><rect x="1054.6" y="609.5" width="32.8" height="8.5" fill="#0560bf"/><rect x="1054.6" y="609.5" width="1" height="8.5" fill="#2b78cc"/><rect x="1086.4" y="609.5" width="1" height="8.5" fill="#2b78cc"/><path d="M1087.4 613.5 H1089.9 Q1091.5 613.5 1091.5 615.1 V623.9 Q1091.5 625.5 1089.9 625.5 H1078.1 Q1076.5 625.5 1076.5 627.1 V642.9 Q1076.5 644.5 1078.1 644.5 H1084.7" fill="none" stroke="#4c4c4c" stroke-width="1.12"/><path d="M1087.7 644.5 L1083.5 642.2 L1083.5 646.8z" fill="#444"/><rect x="1087.6" y="639.3" width="8.4" height="8.4" fill="#0560bf"/><rect x="1087.6" y="639.3" width="1" height="8.4" fill="#2b78cc"/><rect x="1095" y="639.3" width="1" height="8.4" fill="#2b78cc"/><path d="M1096 643.5 H1098.9 Q1100.5 643.5 1100.5 645.1 V653.9 Q1100.5 655.5 1098.9 655.5 H1087.1 Q1085.5 655.5 1085.5 657.1 V672.9 Q1085.5 674.5 1087.1 674.5 H1093.8" fill="none" stroke="#4c4c4c" stroke-width="1.12"/><path d="M1096.8 674.5 L1092.6 672.2 L1092.6 676.8z" fill="#444"/><rect x="1096.7" y="668.6" width="7.8" height="8.7" fill="#0560bf"/><rect x="1096.7" y="668.6" width="1" height="8.7" fill="#2b78cc"/><rect x="1103.5" y="668.6" width="1" height="8.7" fill="#2b78cc"/><path d="M1104.5 672.5 H1106.9 Q1108.5 672.5 1108.5 674.1 V682.9 Q1108.5 684.5 1106.9 684.5 H1091.1 Q1089.5 684.5 1089.5 686.1 V701.9 Q1089.5 703.5 1091.1 703.5 H1097.6" fill="none" stroke="#4c4c4c" stroke-width="1.12"/><path d="M1100.6 703.5 L1096.4 701.2 L1096.4 705.8z" fill="#444"/><path d="M1104.6 698.5 L1109.3 703.2 L1104.6 707.9 L1099.9 703.2z" fill="#ff8a0c"/>
</svg>
<div class="t " style="font-size:10.72px;left:38.2px;top:131px;">3/28/18; Chris; Jennifer; Katherine; Denise; Exteriors Unlimited</div>
<div class="t " style="font-size:10.72px;left:204.6px;top:173px;">4/16/18; Chris; Jennifer; Katherine; Denise; Exteriors Unlimited</div>
<div class="t " style="font-size:10.72px;left:289px;top:214px;">4/26/18; Chris; Jennifer; Katherine; Denise; Exteriors Unlimited</div>
<div class="t " style="font-size:10.72px;left:401px;top:310px;">Jennifer; Chris</div>
<div class="t " style="font-size:10.72px;left:443.4px;top:345px;">Exteriors Unlimited</div>
<div class="t " style="font-size:10.72px;left:491px;top:381px;">Tom Sheldon</div>
<div class="t " style="font-size:10.72px;left:510.6px;top:416px;">Denise; Katherine</div>
<div class="t " style="font-size:10.72px;left:460.5px;top:445px;">Rich Gannon; Ellen</div>
<div class="t " style="font-size:10.72px;left:518.4px;top:475px;">Joe Smith; HVAC R Us</div>
<div class="t " style="font-size:10.72px;left:552px;top:504px;">Pat O'Tormey; Katherine;</div>
<div class="t " style="font-size:10.72px;left:560.9px;top:534px;">Jane Postal</div>
<div class="t " style="font-size:10.72px;left:569.1px;top:564px;">Mike Grabowski</div>
<div class="t " style="font-size:10.72px;left:573.6px;top:594px;">5/31/18; Denise; Exteriors Unlimited</div>
</div>
<div class="b " style="left:1220px;top:61px;width:2.6px;height:796px;background:#eeeeee;"></div>
<div class="b " style="left:1222.6px;top:95px;width:1px;height:762px;background:#dadada;"></div>
<div class="b " style="left:1223.9px;top:68.1px;width:89.3px;height:26.6px;background:#3fa1f9;"></div>
<div class="b " style="left:1313.2px;top:68.1px;width:179.6px;height:26.6px;background:#fafafa;border-top:0.6px solid #e2e2e2;border-bottom:0.6px solid #dcdcdc;"></div>
<div class="b " style="left:1402px;top:68.5px;width:1px;height:26px;background:#e4e4e4;"></div>
<div class="t " style="font-size:10.25px;font-weight:bold;color:#fff;left:1257.1px;top:74px;line-height:16px;">Task</div>
<div class="t " style="font-size:11.21px;color:#a89fa1;left:1325.8px;top:73px;line-height:16px;">Assignments</div>
<div class="t " style="font-size:11.14px;color:#a89fa1;left:1435.3px;top:73px;line-height:16px;">Links</div>
<svg class="b" style="left:1225px;top:103px;" width="10" height="9" viewBox="-0.8 -0.7 10 9"><path d="M0.2 0.3 H7.6 L3.9 6.4z" fill="#7a7a7a"/></svg>
<div class="t " style="letter-spacing:-0.04px;font-size:10.5px;font-weight:bold;color:#000;left:1241.7px;top:99px;">Info</div>
<div class="b " style="left:1224.4px;top:112px;width:262.6px;height:0.8px;background:#d6d6d6;"></div>
<div class="t " style="letter-spacing:-0.27px;font-size:10.5px;color:#151515;left:1241.7px;top:119px;">Name:</div>
<div class="b " style="left:1318.4px;top:118.2px;width:148px;height:15.9px;background:#fff;border:0.8px solid #cecece;border-top-color:#c2c2c2;"></div>
<div class="t " style="letter-spacing:0.03px;font-size:10.5px;color:#111;left:1321.8px;top:119px;">Submit Copy, Photos &amp; Artwor</div>
<div class="t " style="letter-spacing:0.03px;font-size:10.5px;color:#151515;left:1241.7px;top:141px;">Duration:</div>
<div class="b " style="left:1318.4px;top:140.4px;width:60px;height:15.9px;background:#fff;border:0.8px solid #cecece;border-top-color:#c2c2c2;"></div>
<div class="t " style="letter-spacing:-0.13px;font-size:10.5px;color:#111;left:1321.8px;top:141px;">4.0</div>
<div class="b " style="left:1379.9px;top:140.5px;width:8px;height:16.1px;background:#fff;border-radius:4px;box-shadow:0 0 0 0.5px rgba(0,0,0,0.16),0 0.5px 0.6px rgba(0,0,0,0.16);"></div>
<svg class="b" style="left:1379px;top:141px;" width="10" height="16" viewBox="-0.9 -0.55 10 16"><path d="M2 5.2 L4 2.9 L6 5.2 M2 9 L4 11.3 L6 9" fill="none" stroke="#3f3f3f" stroke-width="0.95" stroke-linecap="round" stroke-linejoin="round"/></svg>
<div class="b " style="left:1402.9px;top:140.5px;width:63.4px;height:14.9px;background:#fff;border-radius:3.5px;box-shadow:0 0 0 0.5px rgba(0,0,0,0.2),0 0.6px 1px rgba(0,0,0,0.25);"></div>
<div class="b " style="left:1453.1px;top:140.5px;width:13.2px;height:14.9px;background:linear-gradient(#63b3ff,#157af6);border-radius:0 3.5px 3.5px 0;"></div>
<svg class="b" style="left:1455px;top:140px;" width="10" height="16" viewBox="-0.7 -0.95 10 16"><path d="M1.6 5.5 L4 3.1 L6.4 5.5 M1.6 8.5 L4 10.9 L6.4 8.5" fill="none" stroke="#fff" stroke-width="1.15" stroke-linecap="round" stroke-linejoin="round"/></svg>
<div class="t " style="letter-spacing:-0.2px;font-size:10.5px;color:#222;left:1409.7px;top:141px;">Day(s)</div>
<div class="t " style="letter-spacing:-0.04px;font-size:10.5px;color:#151515;left:1241.7px;top:164px;">Complete:</div>
<div class="b " style="left:1318.4px;top:163.3px;width:148px;height:15.1px;background:#fff;border:0.8px solid #cecece;border-top-color:#c2c2c2;"></div>
<div class="t " style="font-size:10px;color:#111;left:1321.8px;top:165px;letter-spacing:-0.3px;">10 %</div>
<div class="b " style="left:1468.5px;top:162.8px;width:8.1px;height:16.1px;background:#fff;border-radius:4px;box-shadow:0 0 0 0.5px rgba(0,0,0,0.16),0 0.5px 0.6px rgba(0,0,0,0.16);"></div>
<svg class="b" style="left:1468px;top:163px;" width="10" height="16" viewBox="-0.55 -0.85 10 16"><path d="M2 5.2 L4 2.9 L6 5.2 M2 9 L4 11.3 L6 9" fill="none" stroke="#3f3f3f" stroke-width="0.95" stroke-linecap="round" stroke-linejoin="round"/></svg>
<div class="t " style="letter-spacing:0.13px;font-size:10.5px;color:#151515;left:1241.7px;top:186px;">Priority:</div>
<div class="b " style="left:1318.4px;top:185.5px;width:148px;height:15.6px;background:#fff;border:0.8px solid #cecece;border-top-color:#c2c2c2;"></div>
<svg class="b" style="left:1320px;top:185px;" width="71" height="18" viewBox="0 -0.5 71 18"><polygon points="6.5,3.4 7.68,6.68 11.16,6.79 8.4,8.92 9.38,12.26 6.5,10.3 3.62,12.26 4.6,8.92 1.84,6.79 5.32,6.68" fill="#1e1e1e"/><polygon points="20.8,3.4 21.98,6.68 25.46,6.79 22.7,8.92 23.68,12.26 20.8,10.3 17.92,12.26 18.9,8.92 16.14,6.79 19.62,6.68" fill="#1e1e1e"/><polygon points="35,3.4 36.18,6.68 39.66,6.79 36.9,8.92 37.88,12.26 35,10.3 32.12,12.26 33.1,8.92 30.34,6.79 33.82,6.68" fill="#1e1e1e"/><polygon points="49.5,3.8 50.68,6.68 53.78,6.91 51.4,8.92 52.15,11.94 49.5,10.3 46.85,11.94 47.6,8.92 45.22,6.91 48.32,6.68" fill="none" stroke="#4a4a4a" stroke-width="0.8"/><polygon points="63.9,3.8 65.08,6.68 68.18,6.91 65.8,8.92 66.55,11.94 63.9,10.3 61.25,11.94 62,8.92 59.62,6.91 62.72,6.68" fill="none" stroke="#4a4a4a" stroke-width="0.8"/></svg>
<div class="t " style="letter-spacing:-0.04px;font-size:10.5px;color:#151515;left:1241.7px;top:208px;">Marker:</div>
<div class="b " style="left:1318.4px;top:207.9px;width:148px;height:14.9px;background:#fff;border-radius:3.5px;box-shadow:0 0 0 0.5px rgba(0,0,0,0.2),0 0.6px 1px rgba(0,0,0,0.25);"></div>
<div class="b " style="left:1453.2px;top:207.9px;width:13.2px;height:14.9px;background:linear-gradient(#63b3ff,#157af6);border-radius:0 3.5px 3.5px 0;"></div>
<svg class="b" style="left:1455px;top:208px;" width="10" height="16" viewBox="-0.8 -0.35 10 16"><path d="M1.6 5.5 L4 3.1 L6.4 5.5 M1.6 8.5 L4 10.9 L6.4 8.5" fill="none" stroke="#fff" stroke-width="1.15" stroke-linecap="round" stroke-linejoin="round"/></svg>
<div class="t " style="letter-spacing:-0.07px;font-size:10.5px;color:#222;left:1325.4px;top:208px;">No Marker</div>
<div class="t " style="letter-spacing:0.04px;font-size:10.5px;color:#151515;left:1241.7px;top:227px;">Milestone:</div>
<div class="b " style="left:1318.5px;top:229.1px;width:11.9px;height:12.2px;background:#fff;border-radius:2.8px;box-shadow:0 0 0 0.5px rgba(0,0,0,0.25),0 0.5px 1px rgba(0,0,0,0.18);"></div>
<svg class="b" style="left:1225px;top:250px;" width="10" height="9" viewBox="-0.8 -0.8 10 9"><path d="M0.2 0.3 H7.6 L3.9 6.4z" fill="#7a7a7a"/></svg>
<div class="t " style="letter-spacing:-0.13px;font-size:10.5px;font-weight:bold;color:#000;left:1241.7px;top:246px;">Cost</div>
<div class="b " style="left:1224.4px;top:259.2px;width:262.6px;height:0.8px;background:#d6d6d6;"></div>
<div class="t " style="letter-spacing:-0.08px;font-size:10.5px;color:#151515;left:1241.7px;top:267px;">Baseline:</div>
<div class="b " style="left:1318.4px;top:266.3px;width:148px;height:15.8px;background:#fff;border:0.8px solid #cecece;border-top-color:#c2c2c2;"></div>
<div class="t " style="letter-spacing:0.03px;font-size:10.5px;color:#111;left:1321.8px;top:267px;">0.00 $</div>
<div class="b " style="left:1468.5px;top:266.2px;width:8.2px;height:16.1px;background:#fff;border-radius:4px;box-shadow:0 0 0 0.5px rgba(0,0,0,0.16),0 0.5px 0.6px rgba(0,0,0,0.16);"></div>
<svg class="b" style="left:1468px;top:267px;" width="10" height="16" viewBox="-0.6 -0.25 10 16"><path d="M2 5.2 L4 2.9 L6 5.2 M2 9 L4 11.3 L6 9" fill="none" stroke="#3f3f3f" stroke-width="0.95" stroke-linecap="round" stroke-linejoin="round"/></svg>
<div class="t " style="letter-spacing:0.03px;font-size:10.5px;color:#151515;left:1241.7px;top:290px;">Actual:</div>
<div class="b " style="left:1318.4px;top:288.4px;width:148px;height:16px;background:#fff;border:0.8px solid #cecece;border-top-color:#c2c2c2;"></div>
<div class="t " style="letter-spacing:0.03px;font-size:10.5px;color:#111;left:1321.8px;top:290px;">0 $</div>
<svg class="b" style="left:1225px;top:314px;" width="10" height="9" viewBox="-0.8 -0.7 10 9"><path d="M0.2 0.3 H7.6 L3.9 6.4z" fill="#7a7a7a"/></svg>
<div class="t " style="letter-spacing:0.01px;font-size:10.5px;font-weight:bold;color:#000;left:1241.7px;top:310px;">Date</div>
<div class="b " style="left:1224.4px;top:323.1px;width:262.6px;height:0.8px;background:#d6d6d6;"></div>
<div class="t " style="letter-spacing:0.2px;font-size:10.5px;color:#151515;left:1241.7px;top:331px;">Start:</div>
<div class="b " style="left:1318.4px;top:329.6px;width:147.6px;height:17.3px;background:#fff;border-top:1px solid #bcbcbc;border-left:1px solid #e3e3e3;border-right:1px solid #e3e3e3;border-bottom:1px solid #e9e9e9;box-shadow:inset 0 1px 0 #e6e6e6;"></div>
<div class="t " style="letter-spacing:0.24px;font-size:10.5px;color:#111;left:1324.7px;top:331px;white-space:pre;">4/30/ 2018,  8:00 AM</div>
<svg class="b" style="left:1449px;top:331px;" width="15" height="15" viewBox="0 -0.8 15 15"><rect x="0.3" y="0.3" width="13.4" height="12.4" fill="#fff" stroke="#cfcfcf" stroke-width="0.5"/><rect x="0.3" y="0.3" width="13.4" height="2.4" fill="#cf3c38"/>
<path d="M0.3 5h13.4M0.3 7.6h13.4M0.3 10.2h13.4M3 2.5v10.2M5.7 2.5v10.2M8.4 2.5v10.2M11.1 2.5v10.2" stroke="#d6d6d6" stroke-width="0.5"/><rect x="7.9" y="4.5" width="3.9" height="3.7" fill="#3a8de8"/></svg>
<div class="b " style="left:1468.5px;top:329.9px;width:8.2px;height:16px;background:#fff;border-radius:4px;box-shadow:0 0 0 0.5px rgba(0,0,0,0.16),0 0.5px 0.6px rgba(0,0,0,0.16);"></div>
<svg class="b" style="left:1468px;top:330px;" width="10" height="16" viewBox="-0.6 -0.9 10 16"><path d="M2 5.2 L4 2.9 L6 5.2 M2 9 L4 11.3 L6 9" fill="none" stroke="#3f3f3f" stroke-width="0.95" stroke-linecap="round" stroke-linejoin="round"/></svg>
<div class="t " style="letter-spacing:-0.09px;font-size:10.5px;color:#151515;left:1241.7px;top:355px;">Finish:</div>
<div class="b " style="left:1318.4px;top:352.9px;width:147.6px;height:17.5px;background:#fff;border-top:1px solid #bcbcbc;border-left:1px solid #e3e3e3;border-right:1px solid #e3e3e3;border-bottom:1px solid #e9e9e9;box-shadow:inset 0 1px 0 #e6e6e6;"></div>
<div class="t " style="letter-spacing:0.21px;font-size:10.5px;color:#111;left:1324.7px;top:355px;white-space:pre;">5/  3/ 2018,  5:00 PM</div>
<svg class="b" style="left:1449px;top:355px;" width="15" height="15" viewBox="0 -0.3 15 15"><rect x="0.3" y="0.3" width="13.4" height="12.4" fill="#fff" stroke="#cfcfcf" stroke-width="0.5"/><rect x="0.3" y="0.3" width="13.4" height="2.4" fill="#cf3c38"/>
<path d="M0.3 5h13.4M0.3 7.6h13.4M0.3 10.2h13.4M3 2.5v10.2M5.7 2.5v10.2M8.4 2.5v10.2M11.1 2.5v10.2" stroke="#d6d6d6" stroke-width="0.5"/><rect x="7.9" y="4.5" width="3.9" height="3.7" fill="#3a8de8"/></svg>
<div class="b " style="left:1468.5px;top:353.3px;width:8.2px;height:16.1px;background:#fff;border-radius:4px;box-shadow:0 0 0 0.5px rgba(0,0,0,0.16),0 0.5px 0.6px rgba(0,0,0,0.16);"></div>
<svg class="b" style="left:1468px;top:354px;" width="10" height="16" viewBox="-0.6 -0.35 10 16"><path d="M2 5.2 L4 2.9 L6 5.2 M2 9 L4 11.3 L6 9" fill="none" stroke="#3f3f3f" stroke-width="0.95" stroke-linecap="round" stroke-linejoin="round"/></svg>
<div class="t " style="letter-spacing:-0.04px;font-size:10.5px;color:#151515;left:1241.7px;top:378px;">Deadline:</div>
<div class="b " style="left:1318.5px;top:379.7px;width:11.9px;height:11.9px;background:#fff;border-radius:2.8px;box-shadow:0 0 0 0.5px rgba(0,0,0,0.25),0 0.5px 1px rgba(0,0,0,0.18);"></div>
<div class="b " style="left:1331.8px;top:376.1px;width:134.2px;height:17.4px;background:#fff;border-top:1px solid #bcbcbc;border-left:1px solid #e3e3e3;border-right:1px solid #e3e3e3;border-bottom:1px solid #e9e9e9;box-shadow:inset 0 1px 0 #e6e6e6;"></div>
<div class="t " style="letter-spacing:-0.06px;font-size:10.5px;color:#111;left:1338px;top:378px;white-space:pre;">4/ 18/ 2018,   1:56 PM</div>
<svg class="b" style="left:1449px;top:378px;opacity:0.45;" width="15" height="15" viewBox="0 -0.4 15 15"><rect x="0.3" y="0.3" width="13.4" height="12.4" fill="#fff" stroke="#cfcfcf" stroke-width="0.5"/><rect x="0.3" y="0.3" width="13.4" height="2.4" fill="#cf3c38"/>
<path d="M0.3 5h13.4M0.3 7.6h13.4M0.3 10.2h13.4M3 2.5v10.2M5.7 2.5v10.2M8.4 2.5v10.2M11.1 2.5v10.2" stroke="#d6d6d6" stroke-width="0.5"/><rect x="7.9" y="4.5" width="3.9" height="3.7" fill="#3a8de8"/></svg>
<div class="b " style="left:1468.5px;top:376.7px;width:8.2px;height:16.1px;background:#fff;border-radius:4px;box-shadow:0 0 0 0.5px rgba(0,0,0,0.16),0 0.5px 0.6px rgba(0,0,0,0.16);"></div>
<svg class="b" style="left:1468px;top:377px;" width="10" height="16" viewBox="-0.6 -0.75 10 16"><path d="M2 5.2 L4 2.9 L6 5.2 M2 9 L4 11.3 L6 9" fill="none" stroke="#b5b5b5" stroke-width="0.95" stroke-linecap="round" stroke-linejoin="round"/></svg>
<svg class="b" style="left:1225px;top:403px;" width="10" height="9" viewBox="-0.8 -0.6 10 9"><path d="M0.2 0.3 H7.6 L3.9 6.4z" fill="#7a7a7a"/></svg>
<div class="t " style="letter-spacing:-0.07px;font-size:10.5px;font-weight:bold;color:#000;left:1241.7px;top:399px;">Scheduling</div>
<div class="b " style="left:1224.4px;top:411.7px;width:262.6px;height:0.8px;background:#d6d6d6;"></div>
<div class="t " style="letter-spacing:0.02px;font-size:10.5px;color:#151515;left:1241.7px;top:419px;">Type:</div>
<div class="b " style="left:1318.4px;top:419.1px;width:148px;height:14.8px;background:#fff;border-radius:3.5px;box-shadow:0 0 0 0.5px rgba(0,0,0,0.2),0 0.6px 1px rgba(0,0,0,0.25);"></div>
<div class="b " style="left:1453.2px;top:419.1px;width:13.2px;height:14.8px;background:linear-gradient(#63b3ff,#157af6);border-radius:0 3.5px 3.5px 0;"></div>
<svg class="b" style="left:1455px;top:419px;" width="10" height="16" viewBox="-0.8 -0.5 10 16"><path d="M1.6 5.5 L4 3.1 L6.4 5.5 M1.6 8.5 L4 10.9 L6.4 8.5" fill="none" stroke="#fff" stroke-width="1.15" stroke-linecap="round" stroke-linejoin="round"/></svg>
<div class="t " style="letter-spacing:-0.08px;font-size:10.5px;color:#222;left:1325.6px;top:419px;">Fixed Units</div>
<div class="t " style="letter-spacing:0.14px;font-size:10.5px;color:#151515;left:1241.7px;top:439px;">Effort driven:</div>
<div class="b " style="left:1318.5px;top:440.1px;width:11.9px;height:12px;background:#fff;border-radius:2.8px;box-shadow:0 0 0 0.5px rgba(0,0,0,0.25),0 0.5px 1px rgba(0,0,0,0.18);"></div>
<div class="b " style="left:234.6px;top:810px;width:985.4px;height:9.5px;background:#ececec;"></div>
<div class="b " style="left:243.2px;top:819px;width:975.8px;height:19px;background:#dfdfdf;border-top:1px solid #c6c6c6;"></div>
<div class="b " style="left:243.2px;top:819px;width:118.3px;height:19px;background:#b9b9b9;border-top:1px solid #a9a9a9;border-radius:0 0 5px 5px;"></div>
<div class="t " style="letter-spacing:-0.02px;font-size:10.6px;color:#111;left:248.7px;top:821px;">Education Publications</div>
<div class="b " style="left:245px;top:838.6px;width:60px;height:20.4px;background:#fafafa;border:1px solid #cdcdcd;"></div>
<div class="b " style="left:263px;top:839px;width:1px;height:18px;background:#cfcfcf;"></div>
<div class="b " style="left:281px;top:839px;width:1px;height:18px;background:#cfcfcf;"></div>
<svg class="b" style="left:248px;top:841px;" width="13" height="14" viewBox="0 -0.5 13 14"><path d="M6 1.2 V10.8 M1.2 6 H10.8" stroke="#2a2a2a" stroke-width="1"/></svg>
<svg class="b" style="left:266px;top:841px;" width="13" height="14" viewBox="0 -0.5 13 14"><path d="M1.2 6 H10.8" stroke="#2a2a2a" stroke-width="1"/></svg>
<svg class="b" style="left:283px;top:841px;" width="22" height="14" viewBox="-0.2 -0.5 22 14"><path d="M8.59 7.07 L10.34 7.8" stroke="#484848" stroke-width="1.9"/><path d="M7.07 8.59 L7.8 10.34" stroke="#484848" stroke-width="1.9"/><path d="M4.93 8.59 L4.2 10.34" stroke="#484848" stroke-width="1.9"/><path d="M3.41 7.07 L1.66 7.8" stroke="#484848" stroke-width="1.9"/><path d="M3.41 4.93 L1.66 4.2" stroke="#484848" stroke-width="1.9"/><path d="M4.93 3.41 L4.2 1.66" stroke="#484848" stroke-width="1.9"/><path d="M7.07 3.41 L7.8 1.66" stroke="#484848" stroke-width="1.9"/><path d="M8.59 4.93 L10.34 4.2" stroke="#484848" stroke-width="1.9"/><circle cx="6" cy="6" r="2.6" fill="none" stroke="#484848" stroke-width="2.1"/><path d="M13.9 4.8 h3.6 l-1.8 2.1z" fill="#444"/></svg>
<div class="t " style="letter-spacing:0.05px;font-size:10.6px;color:#111;left:372.8px;top:840px;">Budget: 30,000 $</div>
<div class="t " style="letter-spacing:0.03px;font-size:10.6px;color:#111;left:576.3px;top:840px;">Actual Cost: 2,088 $</div>
<div class="t " style="letter-spacing:-0.07px;font-size:10.6px;color:#111;left:783.2px;top:840px;">Profit: 27,912 $</div>
<div class="t " style="letter-spacing:0.12px;font-size:8.8px;color:#222;left:1020px;top:841px;">Mo - 3 d</div>
<svg class="b" style="left:1063px;top:841px;" width="9" height="15" viewBox="0 0 9 15"><path d="M1.4 5.3 L4 2.7 L6.6 5.3 M1.4 8.5 L4 11.1 L6.6 8.5" fill="none" stroke="#3f3f3f" stroke-width="1.1" stroke-linecap="round" stroke-linejoin="round"/></svg>
<div class="b " style="left:1076.5px;top:846.3px;width:69.5px;height:2px;background:#3b8ff3;border-radius:1px;"></div>
<div class="b " style="left:1146px;top:846.3px;width:68.7px;height:2px;background:#c2c2c2;border-radius:1px;"></div>
<div class="b " style="left:1139.2px;top:840.6px;width:13.4px;height:13.4px;background:#fff;border-radius:50%;box-shadow:0 0 0 0.5px rgba(0,0,0,0.22),0 0.8px 1.2px rgba(0,0,0,0.25);"></div>
<div class="b " style="left:0px;top:853px;width:4px;height:4px;background:radial-gradient(circle at 100% 0%,transparent 3.6px,#000 4.2px);"></div>
<div class="b " style="left:1496px;top:853px;width:4px;height:4px;background:radial-gradient(circle at 0% 0%,transparent 3.4px,#8a8a8a 4.4px);"></div>
<div class="b " style="left:0px;top:0px;width:2px;height:2px;background:radial-gradient(circle at 100% 100%,transparent 1.7px,#8c9a9a 2.5px);"></div>
</body></html>
